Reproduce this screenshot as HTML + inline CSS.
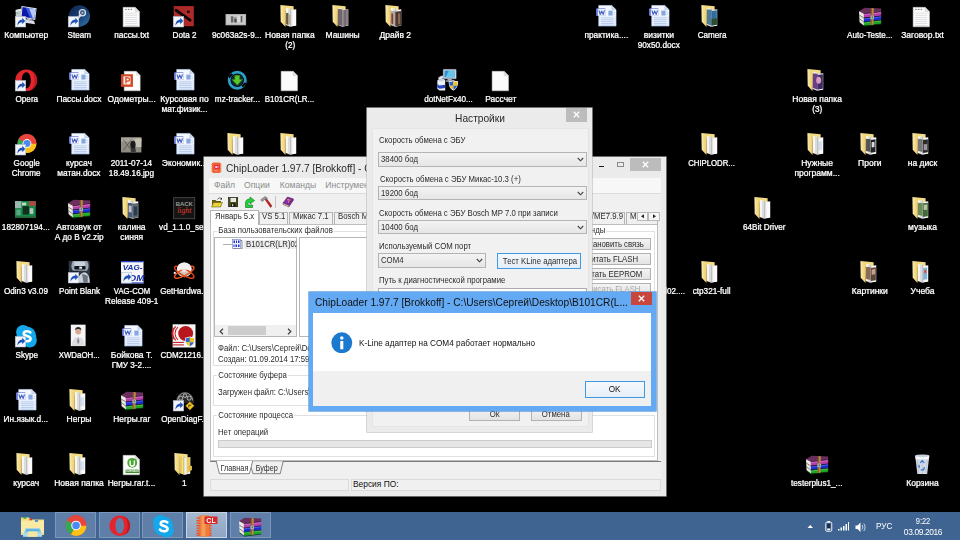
<!DOCTYPE html><html lang="ru"><head><meta charset="utf-8"><title>Desktop</title><style>
html,body{margin:0;padding:0;background:#000}
body{width:960px;height:540px;background:#000;position:relative;overflow:hidden;font-family:"Liberation Sans",sans-serif;}
.a{position:absolute}
.ic{position:absolute;width:22.5px;height:22.5px}
.ic svg{width:100%;height:100%;display:block;overflow:visible}
.lb{position:absolute;width:70px;text-align:center;color:#fff;font-size:8.5px;line-height:10px;white-space:nowrap;-webkit-text-stroke:.22px #fff;text-shadow:0 0 1px rgba(255,255,255,.3)}
.t{position:absolute;white-space:nowrap;font-size:8px;line-height:10px;color:#000}
.cb{position:absolute;border:.7px solid #b4b4b4;background:linear-gradient(#f3f3f3,#e6e6e6);box-sizing:border-box}
.btn{position:absolute;border:.7px solid #b2b2b2;background:linear-gradient(#f4f4f4,#e3e3e3);box-sizing:border-box;text-align:center;font-size:8px;color:#000;white-space:nowrap}
.btn span{display:inline-block;transform:scaleX(.885);transform-origin:50% 50%}
</style></head><body><div id="w" style="position:absolute;left:0;top:0;width:960px;height:540px;filter:blur(.4px)">
<svg width="0" height="0" style="position:absolute"><defs><linearGradient id="fg" x1="0" y1="0" x2="1" y2="0"><stop offset="0" stop-color="#faecb0"/><stop offset="1" stop-color="#ecca60"/></linearGradient><linearGradient id="sg" x1="0" y1="0" x2="1" y2="1"><stop offset="0" stop-color="#0f2248"/><stop offset=".55" stop-color="#1c4278"/><stop offset="1" stop-color="#2f7ab2"/></linearGradient></defs></svg>
<div class="ic" style="left:15.1px;top:5.0px"><svg viewBox="0 0 32 32"><polygon points="1,7 8.500,5.500 8.500,24 1,22" fill="#c6cad3"/><polygon points="1,7 8.500,5.500 8.500,8 1,9.500" fill="#e4e7ec"/><rect x="2.300" y="10.500" width="1.800" height="1.800" fill="#58c848"/><polygon points="14,20 27,22.500 28.500,27.500 12,25" fill="#d9dde5"/><polygon points="17,19 24,20.500 24,23 17,21.500" fill="#aeb4c0"/><polygon points="9.300,1.400 30.700,4.700 28.700,21.300 8,17.400" fill="#e9eef7"/><polygon points="10.600,3 29.300,5.900 27.600,19.700 9.400,16.200" fill="#0b18a8"/><polygon points="17,4 29.300,5.900 27.600,19.700 24,19" fill="#b8c9f6"/><polygon points="15,3.700 20,4.500 25.500,19.300 21.500,18.500" fill="#3a58d8"/><rect x="0.300" y="16.300" width="15" height="15" fill="#f1f4f9" stroke="#aab4c4" stroke-width=".7"/><path d="M3.500 29c0-5.500 2.800-8.200 6.800-8.200v-2.800l4.200 4.600-4.200 4.600v-2.800c-2.800 0-4.800 1.300-6.800 4.600z" fill="#1f52b8"/></svg></div>
<div class="lb" style="left:-8.7px;top:30.2px">Компьютер</div>
<div class="ic" style="left:67.8px;top:5.0px"><svg viewBox="0 0 32 32"><circle cx="16.100" cy="15.600" r="15.200" fill="url(#sg)"/><circle cx="20.500" cy="10.900" r="4.300" fill="none" stroke="#d5dde8" stroke-width="2"/><circle cx="20.500" cy="10.900" r="1.700" fill="#aebccc"/><path d="M17.500 14.500l-4.500 5.500" stroke="#d5dde8" stroke-width="3.200" stroke-linecap="round"/><circle cx="12" cy="21" r="3.200" fill="#d5dde8"/><rect x="0.300" y="16.300" width="15" height="15" fill="#f1f4f9" stroke="#aab4c4" stroke-width=".7"/><path d="M3.500 29c0-5.500 2.800-8.200 6.800-8.200v-2.800l4.200 4.600-4.200 4.600v-2.800c-2.800 0-4.800 1.300-6.800 4.600z" fill="#1f52b8"/></svg></div>
<div class="lb" style="left:44.0px;top:30.2px"><span style="display:inline-block;transform:scaleX(0.956)">Steam</span></div>
<div class="ic" style="left:120.5px;top:5.0px"><svg viewBox="0 0 32 32"><path d="M3 3.300h17l6.300 6.300v21.400h-23.300z" fill="#fbfbfb" stroke="#cfcfcf" stroke-width=".7"/><path d="M20 3.300v6.300h6.300z" fill="#dedede" stroke="#cfcfcf" stroke-width=".5"/><rect x="6" y="11" width="17" height="1" fill="#d2d5da"/><rect x="6" y="14" width="17" height="1" fill="#d2d5da"/><rect x="6" y="17" width="17" height="1" fill="#d2d5da"/><rect x="6" y="20" width="17" height="1" fill="#d2d5da"/><rect x="6" y="23" width="17" height="1" fill="#d2d5da"/><rect x="6" y="26" width="17" height="1" fill="#d2d5da"/><rect x="6" y="28.6" width="17" height="1" fill="#d2d5da"/><rect x="6" y="5.500" width="2.200" height="1.600" fill="#8a8a8a"/><rect x="9.800" y="5.500" width="2.200" height="1.600" fill="#8a8a8a"/><rect x="13.600" y="5.500" width="2.200" height="1.600" fill="#8a8a8a"/></svg></div>
<div class="lb" style="left:96.7px;top:30.2px"><span style="display:inline-block;transform:scaleX(0.984)">пассы.txt</span></div>
<div class="ic" style="left:173.2px;top:5.0px"><svg viewBox="0 0 32 32"><rect x="1" y="1.600" width="28.600" height="28.600" fill="#ae2a28"/><path d="M4.300 7.500L24.300 21.500" stroke="#0c0606" stroke-width="4.200" stroke-linecap="round"/><rect x="20" y="8" width="3.600" height="3.400" fill="#0c0606"/><path d="M2 25l5 4h-5z" fill="#d65a54" opacity=".6"/><rect x="0.300" y="16.300" width="15" height="15" fill="#f1f4f9" stroke="#aab4c4" stroke-width=".7"/><path d="M3.500 29c0-5.500 2.800-8.200 6.800-8.200v-2.800l4.200 4.600-4.200 4.600v-2.800c-2.800 0-4.800 1.300-6.800 4.600z" fill="#1f52b8"/></svg></div>
<div class="lb" style="left:149.5px;top:30.2px"><span style="display:inline-block;transform:scaleX(0.955)">Dota 2</span></div>
<div class="ic" style="left:225.9px;top:5.0px"><svg viewBox="0 0 32 32"><rect x="-0.700" y="12.800" width="29.300" height="16.100" fill="#a9a9a9"/><rect x="0.500" y="14" width="27" height="13.800" fill="#c9c9c9"/><rect x="7" y="16" width="3" height="9" fill="#6a6a6a"/><rect x="10" y="17" width="6" height="7" fill="#9a9a9a"/><rect x="16" y="16" width="4" height="8" fill="#dedede"/><rect x="21" y="15.500" width="2.200" height="9" fill="#5a5a5a"/><rect x="12" y="20" width="3" height="5" fill="#4a4a4a"/></svg></div>
<div class="lb" style="left:202.2px;top:30.2px"><span style="display:inline-block;transform:scaleX(0.964)">9c063a2s-9...</span></div>
<div class="ic" style="left:278.7px;top:5.0px"><svg viewBox="0 0 32 32"><polygon points="2,0 20.800,1.700 20.800,8 9.700,8" fill="#f3dc84"/><polygon points="9.200,4.400 16.100,5.400 16.100,30.700 9.200,28.600" fill="#f7f7f7"/><polygon points="12.700,5 16.100,5.400 16.100,30.700 12.700,29.700" fill="#dcdcdc"/><polygon points="16.100,7 24.500,6 24.500,29.600 16.100,30.700" fill="#fbfbfb"/><polygon points="16.100,7 19,6.700 19,30.300 16.100,30.700" fill="#e2e2e2"/><polygon points="15.700,5.300 16.500,5.450 16.500,30.700 15.700,30.600" fill="#a8a8a8"/><polygon points="10,11 13.500,11.600 13.500,28.500 10,27.500" fill="#6a5a48"/><polygon points="13.500,14 16,14.300 16,27 13.500,26.500" fill="#b8a890"/><polygon points="2,0 9.700,3.900 9.200,31.200 2.400,23.900" fill="url(#fg)"/></svg></div>
<div class="lb" style="left:254.9px;top:30.2px">Новая папка<br><span style="display:inline-block;transform:scaleX(0.957)">(2)</span></div>
<div class="ic" style="left:331.4px;top:5.0px"><svg viewBox="0 0 32 32"><polygon points="2,0 20.800,1.700 20.800,8 9.700,8" fill="#f3dc84"/><polygon points="9.200,4.400 16.100,5.400 16.100,30.700 9.200,28.600" fill="#f7f7f7"/><polygon points="12.700,5 16.100,5.400 16.100,30.700 12.700,29.700" fill="#dcdcdc"/><polygon points="16.100,7 24.500,6 24.500,29.600 16.100,30.700" fill="#fbfbfb"/><polygon points="16.100,7 19,6.700 19,30.300 16.100,30.700" fill="#e2e2e2"/><polygon points="15.700,5.300 16.500,5.450 16.500,30.700 15.700,30.600" fill="#a8a8a8"/><polygon points="9.500,5.500 16.100,6.500 16.100,30 9.500,28" fill="#6e666c"/><polygon points="16.100,7.500 24.500,6.500 24.500,29.200 16.100,30.300" fill="#8a8086"/><polygon points="19.500,7.200 20.500,7.100 20.500,29.800 19.500,29.900" fill="#4a4448"/><polygon points="2,0 9.700,3.900 9.200,31.200 2.400,23.900" fill="url(#fg)"/></svg></div>
<div class="lb" style="left:307.6px;top:30.2px">Машины</div>
<div class="ic" style="left:384.1px;top:5.0px"><svg viewBox="0 0 32 32"><polygon points="2,0 20.800,1.700 20.800,8 9.700,8" fill="#f3dc84"/><polygon points="9.200,4.400 16.100,5.400 16.100,30.700 9.200,28.600" fill="#f7f7f7"/><polygon points="12.700,5 16.100,5.400 16.100,30.700 12.700,29.700" fill="#dcdcdc"/><polygon points="16.100,7 24.500,6 24.500,29.600 16.100,30.700" fill="#fbfbfb"/><polygon points="16.100,7 19,6.700 19,30.300 16.100,30.700" fill="#e2e2e2"/><polygon points="15.700,5.300 16.500,5.450 16.500,30.700 15.700,30.600" fill="#a8a8a8"/><polygon points="9.500,8 16.100,9 16.100,30 9.500,28" fill="#b4a8a4"/><polygon points="10.500,12 13,12.400 13,27 10.500,26.300" fill="#8a3a30"/><polygon points="16.100,9.500 24.500,8.500 24.500,29.200 16.100,30.300" fill="#4a3830"/><polygon points="20,12 23,11.700 23,27 20,27.400" fill="#8a6a50"/><polygon points="2,0 9.700,3.900 9.200,31.200 2.400,23.900" fill="url(#fg)"/></svg></div>
<div class="lb" style="left:360.3px;top:30.2px">Драйв 2</div>
<div class="ic" style="left:595.0px;top:5.0px"><svg viewBox="0 0 32 32"><path d="M5.200 .600h18.500l6.300 6.300v23.100h-24.800z" fill="#e6eefb" stroke="#a8bfe4" stroke-width=".8"/><path d="M5.600 1h18l6 6v9h-24z" fill="#f4f8fe"/><path d="M23.700 .600v6.300h6.300z" fill="#c9d9f1" stroke="#a8bfe4" stroke-width=".5"/><rect x="8.500" y="17.8" width="18" height="1.200" fill="#b3c8ea"/><rect x="8.500" y="20.4" width="18" height="1.200" fill="#b3c8ea"/><rect x="8.500" y="23" width="18" height="1.200" fill="#b3c8ea"/><rect x="8.500" y="25.6" width="18" height="1.200" fill="#b3c8ea"/><rect x="8.500" y="28" width="18" height="1.200" fill="#b3c8ea"/><rect x="19" y="8" width="6" height="7" fill="#86a8de"/><rect x="26" y="10" width="2.500" height="1.100" fill="#b3c8ea"/><rect x="26" y="13" width="2.500" height="1.100" fill="#b3c8ea"/><rect x="1.600" y="4.700" width="13.500" height="11.100" rx="1.500" fill="#7684dc"/><rect x="4.200" y="5.600" width="10.900" height="9.600" rx=".8" fill="#f3f6fd"/><path d="M5.600 7.600l1.700 5.800 2.200-4.800 2.200 4.800 1.800-5.800" fill="none" stroke="#3f5fc4" stroke-width="1.600" stroke-linejoin="round"/></svg></div>
<div class="lb" style="left:571.2px;top:30.2px"><span style="display:inline-block;transform:scaleX(0.983)">практика....</span></div>
<div class="ic" style="left:647.7px;top:5.0px"><svg viewBox="0 0 32 32"><path d="M5.200 .600h18.500l6.300 6.300v23.100h-24.800z" fill="#e6eefb" stroke="#a8bfe4" stroke-width=".8"/><path d="M5.600 1h18l6 6v9h-24z" fill="#f4f8fe"/><path d="M23.700 .600v6.300h6.300z" fill="#c9d9f1" stroke="#a8bfe4" stroke-width=".5"/><rect x="8.500" y="17.8" width="18" height="1.200" fill="#b3c8ea"/><rect x="8.500" y="20.4" width="18" height="1.200" fill="#b3c8ea"/><rect x="8.500" y="23" width="18" height="1.200" fill="#b3c8ea"/><rect x="8.500" y="25.6" width="18" height="1.200" fill="#b3c8ea"/><rect x="8.500" y="28" width="18" height="1.200" fill="#b3c8ea"/><rect x="19" y="8" width="6" height="7" fill="#86a8de"/><rect x="26" y="10" width="2.500" height="1.100" fill="#b3c8ea"/><rect x="26" y="13" width="2.500" height="1.100" fill="#b3c8ea"/><rect x="1.600" y="4.700" width="13.500" height="11.100" rx="1.500" fill="#7684dc"/><rect x="4.200" y="5.600" width="10.900" height="9.600" rx=".8" fill="#f3f6fd"/><path d="M5.600 7.600l1.700 5.800 2.200-4.800 2.200 4.800 1.800-5.800" fill="none" stroke="#3f5fc4" stroke-width="1.600" stroke-linejoin="round"/></svg></div>
<div class="lb" style="left:623.9px;top:30.2px">визитки<br><span style="display:inline-block;transform:scaleX(0.968)">90x50.docx</span></div>
<div class="ic" style="left:700.4px;top:5.0px"><svg viewBox="0 0 32 32"><polygon points="2,0 20.800,1.700 20.800,8 9.700,8" fill="#f3dc84"/><polygon points="9.200,4.400 16.100,5.400 16.100,30.700 9.200,28.600" fill="#f7f7f7"/><polygon points="12.700,5 16.100,5.400 16.100,30.700 12.700,29.700" fill="#dcdcdc"/><polygon points="16.100,7 24.500,6 24.500,29.600 16.100,30.700" fill="#fbfbfb"/><polygon points="16.100,7 19,6.700 19,30.300 16.100,30.700" fill="#e2e2e2"/><polygon points="15.700,5.300 16.500,5.450 16.500,30.700 15.700,30.600" fill="#a8a8a8"/><polygon points="9.500,6 16.500,7 16.500,29 9.500,27" fill="#4d7a9c"/><polygon points="16.500,8.500 24,7.500 24,28 16.500,29" fill="#2f6f9f"/><polygon points="16.500,20 24,19 24,28 16.500,29" fill="#2c4f2c"/><polygon points="2,0 9.700,3.900 9.200,31.200 2.400,23.900" fill="url(#fg)"/></svg></div>
<div class="lb" style="left:676.7px;top:30.2px"><span style="display:inline-block;transform:scaleX(0.958)">Camera</span></div>
<div class="ic" style="left:858.6px;top:5.0px"><svg viewBox="0 0 32 32"><polygon points="0,9 8,4 31.500,4.800 31.500,9.500 7,12.500" fill="#6b2f5e"/><polygon points="0,9 7,12.500 7,29.500 0.800,24.500" fill="#ece8e2"/><path d="M0.300 14.300l6.700 4.200M0.600 19.500l6.400 4.800" stroke="#4a4a4a" stroke-width=".9"/><polygon points="7,12.500 31.500,9.500 31.500,15.300 7,18.300" fill="#b83cae"/><polygon points="7,12.500 31.500,9.500 31.500,11.300 7,14.300" fill="#e070d2"/><polygon points="7,18.700 31.500,15.700 31.500,21.300 7,24.300" fill="#1c2ed0"/><polygon points="7,18.700 31.500,15.700 31.500,17.300 7,20.300" fill="#4a62f0"/><polygon points="7,24.700 31.500,21.700 31.500,26.800 7,29.600" fill="#1fa526"/><polygon points="7,24.700 31.500,21.700 31.500,23.200 7,26.200" fill="#4ad64c"/><path d="M7 18.500L31.500 15.500M7 24.500L31.500 21.500M7 12.500L31.500 9.500" stroke="#1c1020" stroke-width=".9"/><polygon points="7,29.600 31.500,26.800 31.500,27.800 7,30.600 .800,25.500 .800,24.500" fill="#0e3a12"/><polygon points="17,4.400 21,4.500 20.600,28.200 16.600,28.600" fill="#b98a3c"/><polygon points="17,4.400 18.300,4.450 17.900,28.450 16.600,28.600" fill="#7a5520"/><rect x="16" y="14.500" width="5.400" height="6" rx="1.200" fill="#cfcfcf" stroke="#4a4a4a" stroke-width=".7"/><rect x="18" y="16" width="1.400" height="3" fill="#333"/></svg></div>
<div class="lb" style="left:834.8px;top:30.2px"><span style="display:inline-block;transform:scaleX(0.953)">Auto-Teste...</span></div>
<div class="ic" style="left:911.3px;top:5.0px"><svg viewBox="0 0 32 32"><path d="M3 3.300h17l6.300 6.300v21.400h-23.300z" fill="#fbfbfb" stroke="#cfcfcf" stroke-width=".7"/><path d="M20 3.300v6.300h6.300z" fill="#dedede" stroke="#cfcfcf" stroke-width=".5"/><rect x="6" y="11" width="17" height="1" fill="#d2d5da"/><rect x="6" y="14" width="17" height="1" fill="#d2d5da"/><rect x="6" y="17" width="17" height="1" fill="#d2d5da"/><rect x="6" y="20" width="17" height="1" fill="#d2d5da"/><rect x="6" y="23" width="17" height="1" fill="#d2d5da"/><rect x="6" y="26" width="17" height="1" fill="#d2d5da"/><rect x="6" y="28.6" width="17" height="1" fill="#d2d5da"/><rect x="6" y="5.500" width="2.200" height="1.600" fill="#8a8a8a"/><rect x="9.800" y="5.500" width="2.200" height="1.600" fill="#8a8a8a"/><rect x="13.600" y="5.500" width="2.200" height="1.600" fill="#8a8a8a"/></svg></div>
<div class="lb" style="left:887.5px;top:30.2px">Заговор.txt</div>
<div class="ic" style="left:15.1px;top:69.0px"><svg viewBox="0 0 32 32"><path fill-rule="evenodd" d="M16 .600a15.500 15.400 0 100 30.800A15.500 15.400 0 0016 .600zm0 3.900c3.700 0 6.400 5 6.400 11.500S19.700 27.500 16 27.500 9.600 22.500 9.600 16 12.300 4.500 16 4.500z" fill="#e3262e"/><path d="M22 1.800a15.500 15.400 0 010 28.400c4-2.800 5.800-7.800 5.800-14.200S26 4.600 22 1.800z" fill="#b3141c" opacity=".7"/><rect x="0.300" y="16.300" width="15" height="15" fill="#f1f4f9" stroke="#aab4c4" stroke-width=".7"/><path d="M3.500 29c0-5.500 2.800-8.200 6.800-8.200v-2.800l4.200 4.600-4.200 4.600v-2.800c-2.800 0-4.800 1.300-6.800 4.600z" fill="#1f52b8"/></svg></div>
<div class="lb" style="left:-8.7px;top:94.2px"><span style="display:inline-block;transform:scaleX(0.956)">Opera</span></div>
<div class="ic" style="left:67.8px;top:69.0px"><svg viewBox="0 0 32 32"><path d="M5.200 .600h18.500l6.300 6.300v23.100h-24.800z" fill="#e6eefb" stroke="#a8bfe4" stroke-width=".8"/><path d="M5.600 1h18l6 6v9h-24z" fill="#f4f8fe"/><path d="M23.700 .600v6.300h6.300z" fill="#c9d9f1" stroke="#a8bfe4" stroke-width=".5"/><rect x="8.500" y="17.8" width="18" height="1.200" fill="#b3c8ea"/><rect x="8.500" y="20.4" width="18" height="1.200" fill="#b3c8ea"/><rect x="8.500" y="23" width="18" height="1.200" fill="#b3c8ea"/><rect x="8.500" y="25.6" width="18" height="1.200" fill="#b3c8ea"/><rect x="8.500" y="28" width="18" height="1.200" fill="#b3c8ea"/><rect x="19" y="8" width="6" height="7" fill="#86a8de"/><rect x="26" y="10" width="2.500" height="1.100" fill="#b3c8ea"/><rect x="26" y="13" width="2.500" height="1.100" fill="#b3c8ea"/><rect x="1.600" y="4.700" width="13.500" height="11.100" rx="1.500" fill="#7684dc"/><rect x="4.200" y="5.600" width="10.900" height="9.600" rx=".8" fill="#f3f6fd"/><path d="M5.600 7.600l1.700 5.800 2.200-4.800 2.200 4.800 1.800-5.800" fill="none" stroke="#3f5fc4" stroke-width="1.600" stroke-linejoin="round"/></svg></div>
<div class="lb" style="left:44.0px;top:94.2px"><span style="display:inline-block;transform:scaleX(0.983)">Пассы.docx</span></div>
<div class="ic" style="left:120.5px;top:69.0px"><svg viewBox="0 0 32 32"><path d="M4.500 3.300h17l5.800 5.800v22h-22.800z" fill="#fdfdfd" stroke="#d0d0d0" stroke-width=".6"/><path d="M21.500 3.300v5.800h5.800z" fill="#e2e2e2"/><rect x="0" y="7.400" width="17" height="18" fill="#d24a26"/><rect x="3.500" y="10.500" width="10" height="11.500" fill="#fbeee8"/><path d="M7 11.500v9M7 12.500h2.800a2.200 2.200 0 010 4.600H7" fill="none" stroke="#d24a26" stroke-width="1.800"/></svg></div>
<div class="lb" style="left:96.7px;top:94.2px">Одометры...</div>
<div class="ic" style="left:173.2px;top:69.0px"><svg viewBox="0 0 32 32"><path d="M5.200 .600h18.500l6.300 6.300v23.100h-24.800z" fill="#e6eefb" stroke="#a8bfe4" stroke-width=".8"/><path d="M5.600 1h18l6 6v9h-24z" fill="#f4f8fe"/><path d="M23.700 .600v6.300h6.300z" fill="#c9d9f1" stroke="#a8bfe4" stroke-width=".5"/><rect x="8.500" y="17.8" width="18" height="1.200" fill="#b3c8ea"/><rect x="8.500" y="20.4" width="18" height="1.200" fill="#b3c8ea"/><rect x="8.500" y="23" width="18" height="1.200" fill="#b3c8ea"/><rect x="8.500" y="25.6" width="18" height="1.200" fill="#b3c8ea"/><rect x="8.500" y="28" width="18" height="1.200" fill="#b3c8ea"/><rect x="19" y="8" width="6" height="7" fill="#86a8de"/><rect x="26" y="10" width="2.500" height="1.100" fill="#b3c8ea"/><rect x="26" y="13" width="2.500" height="1.100" fill="#b3c8ea"/><rect x="1.600" y="4.700" width="13.500" height="11.100" rx="1.500" fill="#7684dc"/><rect x="4.200" y="5.600" width="10.900" height="9.600" rx=".8" fill="#f3f6fd"/><path d="M5.600 7.600l1.700 5.800 2.200-4.800 2.200 4.800 1.800-5.800" fill="none" stroke="#3f5fc4" stroke-width="1.600" stroke-linejoin="round"/></svg></div>
<div class="lb" style="left:149.5px;top:94.2px">Курсовая по<br><span style="display:inline-block;transform:scaleX(0.983)">мат.физик...</span></div>
<div class="ic" style="left:225.9px;top:69.0px"><svg viewBox="0 0 32 32"><circle cx="16" cy="16" r="11.500" fill="none" stroke="#2aa0c8" stroke-width="4"/><circle cx="16" cy="16" r="8.500" fill="#0e2a33"/><path d="M4 12l5-5M28 20l-5 5" stroke="#000" stroke-width="3"/><path d="M12.500 9h7v6h4l-7.500 8-7.500-8h4z" fill="#58c828" stroke="#2c7a10" stroke-width=".8"/></svg></div>
<div class="lb" style="left:202.2px;top:94.2px"><span style="display:inline-block;transform:scaleX(0.964)">mz-tracker...</span></div>
<div class="ic" style="left:278.7px;top:69.0px"><svg viewBox="0 0 32 32"><path d="M3 3.300h17l6.300 6.300v21.400h-23.300z" fill="#fbfbfb" stroke="#cfcfcf" stroke-width=".7"/><path d="M20 3.300v6.300h6.300z" fill="#dedede" stroke="#cfcfcf" stroke-width=".5"/></svg></div>
<div class="lb" style="left:254.9px;top:94.2px"><span style="display:inline-block;transform:scaleX(0.934)">B101CR(LR...</span></div>
<div class="ic" style="left:436.8px;top:69.0px"><svg viewBox="0 0 32 32"><rect x="8.800" y=".500" width="18.500" height="13.500" rx="1" fill="#d9dee7" stroke="#8d97a8" stroke-width=".6"/><rect x="10.600" y="2.200" width="14.900" height="9.800" fill="#2f8fd0"/><polygon points="17,2.200 25.500,2.200 25.500,12 12,12" fill="#74d2ec" opacity=".8"/><rect x="15" y="14" width="6" height="2.500" fill="#aab2c0"/><rect x="12.500" y="16.300" width="11" height="1.600" fill="#c9d0db"/><polygon points=".500,16.500 6,13 11.600,15.500 11.600,30.500 3.500,30.700 .500,28" fill="#eef2f8"/><polygon points=".500,16.500 6,13 11.600,15.500 6,18" fill="#cfd6e2"/><polygon points=".500,21.500 3.500,23.500 11.600,22.500 11.600,27 3.500,28 .500,26" fill="#2746c4"/><ellipse cx="5.500" cy="12.500" rx="4" ry="2.200" fill="#dfe5ee" stroke="#9aa4b6" stroke-width=".5" transform="rotate(-25 5.500 12.500)"/><path d="M16.600 17.500c2.500 0 4.700-.6 6.700-1.500 2 .9 4.200 1.500 6.700 1.500 0 7-2.200 11-6.700 13.200-4.500-2.200-6.700-6.200-6.700-13.200z" fill="#f2f5fa"/><path d="M17.600 18.400c2 0 4-.5 5.700-1.300v6.700h-5.300a22 22 0 01-.4-5.400z" fill="#2f66cc"/><path d="M23.300 17.100c1.700.8 3.700 1.300 5.700 1.300 0 2-.1 3.800-.4 5.400h-5.300z" fill="#f2c21e"/><path d="M18 23.800h5.300v5.800c-2.600-1.300-4.400-3-5.300-5.800z" fill="#f2c21e"/><path d="M23.300 23.800h5.300c-.9 2.800-2.700 4.500-5.300 5.800z" fill="#2f66cc"/></svg></div>
<div class="lb" style="left:413.1px;top:94.2px"><span style="display:inline-block;transform:scaleX(0.955)">dotNetFx40...</span></div>
<div class="ic" style="left:489.5px;top:69.0px"><svg viewBox="0 0 32 32"><path d="M3 3.300h17l6.300 6.300v21.400h-23.300z" fill="#fbfbfb" stroke="#cfcfcf" stroke-width=".7"/><path d="M20 3.300v6.300h6.300z" fill="#dedede" stroke="#cfcfcf" stroke-width=".5"/></svg></div>
<div class="lb" style="left:465.8px;top:94.2px">Рассчет</div>
<div class="ic" style="left:805.8px;top:69.0px"><svg viewBox="0 0 32 32"><polygon points="2,0 20.800,1.700 20.800,8 9.700,8" fill="#f3dc84"/><polygon points="9.200,4.400 16.100,5.400 16.100,30.700 9.200,28.600" fill="#f7f7f7"/><polygon points="12.700,5 16.100,5.400 16.100,30.700 12.700,29.700" fill="#dcdcdc"/><polygon points="16.100,7 24.500,6 24.500,29.600 16.100,30.700" fill="#fbfbfb"/><polygon points="16.100,7 19,6.700 19,30.300 16.100,30.700" fill="#e2e2e2"/><polygon points="15.700,5.300 16.500,5.450 16.500,30.700 15.700,30.600" fill="#a8a8a8"/><polygon points="9.500,6 16.500,7 16.500,29 9.500,27" fill="#6a3f8a"/><polygon points="16.500,8.500 24,7.500 24,28 16.500,29" fill="#3d2a66"/><ellipse cx="18" cy="16" rx="3.500" ry="5" fill="#d99ac0"/><polygon points="2,0 9.700,3.900 9.200,31.200 2.400,23.900" fill="url(#fg)"/></svg></div>
<div class="lb" style="left:782.1px;top:94.2px">Новая папка<br><span style="display:inline-block;transform:scaleX(0.957)">(3)</span></div>
<div class="ic" style="left:15.1px;top:133.0px"><svg viewBox="0 0 32 32"><circle cx="17" cy="15" r="13.500" fill="#e8453c"/><path d="M17 15L5.300 8.200A13.500 13.500 0 0010.300 26.700z" fill="#34a853"/><path d="M17 15l-6.700 11.700A13.500 13.500 0 0030.500 15z" fill="#fbc116"/><path d="M17 15h13.500A13.500 13.500 0 005.300 8.200z" fill="#e8453c"/><circle cx="17" cy="15" r="6.300" fill="#f4f4f4"/><circle cx="17" cy="15" r="4.900" fill="#4a8af4"/><rect x="0.300" y="16.300" width="15" height="15" fill="#f1f4f9" stroke="#aab4c4" stroke-width=".7"/><path d="M3.500 29c0-5.500 2.800-8.200 6.800-8.200v-2.800l4.200 4.600-4.200 4.600v-2.800c-2.800 0-4.800 1.300-6.800 4.600z" fill="#1f52b8"/></svg></div>
<div class="lb" style="left:-8.7px;top:158.2px"><span style="display:inline-block;transform:scaleX(0.958)">Google</span><br><span style="display:inline-block;transform:scaleX(0.958)">Chrome</span></div>
<div class="ic" style="left:67.8px;top:133.0px"><svg viewBox="0 0 32 32"><path d="M5.200 .600h18.500l6.300 6.300v23.100h-24.800z" fill="#e6eefb" stroke="#a8bfe4" stroke-width=".8"/><path d="M5.600 1h18l6 6v9h-24z" fill="#f4f8fe"/><path d="M23.700 .600v6.300h6.300z" fill="#c9d9f1" stroke="#a8bfe4" stroke-width=".5"/><rect x="8.500" y="17.8" width="18" height="1.200" fill="#b3c8ea"/><rect x="8.500" y="20.4" width="18" height="1.200" fill="#b3c8ea"/><rect x="8.500" y="23" width="18" height="1.200" fill="#b3c8ea"/><rect x="8.500" y="25.6" width="18" height="1.200" fill="#b3c8ea"/><rect x="8.500" y="28" width="18" height="1.200" fill="#b3c8ea"/><rect x="19" y="8" width="6" height="7" fill="#86a8de"/><rect x="26" y="10" width="2.500" height="1.100" fill="#b3c8ea"/><rect x="26" y="13" width="2.500" height="1.100" fill="#b3c8ea"/><rect x="1.600" y="4.700" width="13.500" height="11.100" rx="1.500" fill="#7684dc"/><rect x="4.200" y="5.600" width="10.900" height="9.600" rx=".8" fill="#f3f6fd"/><path d="M5.600 7.600l1.700 5.800 2.200-4.800 2.200 4.800 1.800-5.800" fill="none" stroke="#3f5fc4" stroke-width="1.600" stroke-linejoin="round"/></svg></div>
<div class="lb" style="left:44.0px;top:158.2px">курсач<br><span style="display:inline-block;transform:scaleX(0.983)">матан.docx</span></div>
<div class="ic" style="left:120.5px;top:133.0px"><svg viewBox="0 0 32 32"><rect x="0" y="6.400" width="29" height="21.300" fill="#8f8c84"/><rect x="0" y="6.400" width="29" height="6" fill="#a8a59b"/><rect x="20" y="8" width="9" height="12" fill="#c4c0b4"/><path d="M3 9l12 16M15 9L3 25" stroke="#4a4640" stroke-width=".9"/><ellipse cx="17" cy="17" rx="3.800" ry="6" fill="#1c1c1c"/><rect x="14" y="22" width="7" height="5" fill="#3a3832"/></svg></div>
<div class="lb" style="left:96.7px;top:158.2px"><span style="display:inline-block;transform:scaleX(0.966)">2011-07-14</span><br><span style="display:inline-block;transform:scaleX(0.965)">18.49.16.jpg</span></div>
<div class="ic" style="left:173.2px;top:133.0px"><svg viewBox="0 0 32 32"><path d="M5.200 .600h18.500l6.300 6.300v23.100h-24.800z" fill="#e6eefb" stroke="#a8bfe4" stroke-width=".8"/><path d="M5.600 1h18l6 6v9h-24z" fill="#f4f8fe"/><path d="M23.700 .600v6.300h6.300z" fill="#c9d9f1" stroke="#a8bfe4" stroke-width=".5"/><rect x="8.500" y="17.8" width="18" height="1.200" fill="#b3c8ea"/><rect x="8.500" y="20.4" width="18" height="1.200" fill="#b3c8ea"/><rect x="8.500" y="23" width="18" height="1.200" fill="#b3c8ea"/><rect x="8.500" y="25.6" width="18" height="1.200" fill="#b3c8ea"/><rect x="8.500" y="28" width="18" height="1.200" fill="#b3c8ea"/><rect x="19" y="8" width="6" height="7" fill="#86a8de"/><rect x="26" y="10" width="2.500" height="1.100" fill="#b3c8ea"/><rect x="26" y="13" width="2.500" height="1.100" fill="#b3c8ea"/><rect x="1.600" y="4.700" width="13.500" height="11.100" rx="1.500" fill="#7684dc"/><rect x="4.200" y="5.600" width="10.900" height="9.600" rx=".8" fill="#f3f6fd"/><path d="M5.600 7.600l1.700 5.800 2.200-4.800 2.200 4.800 1.800-5.800" fill="none" stroke="#3f5fc4" stroke-width="1.600" stroke-linejoin="round"/></svg></div>
<div class="lb" style="left:149.5px;top:158.2px">Экономик...</div>
<div class="ic" style="left:225.9px;top:133.0px"><svg viewBox="0 0 32 32"><polygon points="2,0 20.800,1.700 20.800,8 9.700,8" fill="#f3dc84"/><polygon points="9.200,4.400 16.100,5.400 16.100,30.700 9.200,28.600" fill="#f7f7f7"/><polygon points="12.700,5 16.100,5.400 16.100,30.700 12.700,29.700" fill="#dcdcdc"/><polygon points="16.100,7 24.500,6 24.500,29.600 16.100,30.700" fill="#fbfbfb"/><polygon points="16.100,7 19,6.700 19,30.300 16.100,30.700" fill="#e2e2e2"/><polygon points="15.700,5.300 16.500,5.450 16.500,30.700 15.700,30.600" fill="#a8a8a8"/><polygon points="2,0 9.700,3.900 9.200,31.200 2.400,23.900" fill="url(#fg)"/></svg></div>
<div class="ic" style="left:278.7px;top:133.0px"><svg viewBox="0 0 32 32"><polygon points="2,0 20.800,1.700 20.800,8 9.700,8" fill="#f3dc84"/><polygon points="9.200,4.400 16.100,5.400 16.100,30.700 9.200,28.600" fill="#f7f7f7"/><polygon points="12.700,5 16.100,5.400 16.100,30.700 12.700,29.700" fill="#dcdcdc"/><polygon points="16.100,7 24.500,6 24.500,29.600 16.100,30.700" fill="#fbfbfb"/><polygon points="16.100,7 19,6.700 19,30.300 16.100,30.700" fill="#e2e2e2"/><polygon points="15.700,5.300 16.500,5.450 16.500,30.700 15.700,30.600" fill="#a8a8a8"/><polygon points="2,0 9.700,3.900 9.200,31.200 2.400,23.900" fill="url(#fg)"/></svg></div>
<div class="ic" style="left:700.4px;top:133.0px"><svg viewBox="0 0 32 32"><polygon points="2,0 20.800,1.700 20.800,8 9.700,8" fill="#f3dc84"/><polygon points="9.200,4.400 16.100,5.400 16.100,30.700 9.200,28.600" fill="#f7f7f7"/><polygon points="12.700,5 16.100,5.400 16.100,30.700 12.700,29.700" fill="#dcdcdc"/><polygon points="16.100,7 24.500,6 24.500,29.600 16.100,30.700" fill="#fbfbfb"/><polygon points="16.100,7 19,6.700 19,30.300 16.100,30.700" fill="#e2e2e2"/><polygon points="15.700,5.300 16.500,5.450 16.500,30.700 15.700,30.600" fill="#a8a8a8"/><polygon points="2,0 9.700,3.900 9.200,31.200 2.400,23.900" fill="url(#fg)"/></svg></div>
<div class="lb" style="left:676.7px;top:158.2px"><span style="display:inline-block;transform:scaleX(0.914)">CHIPLODR...</span></div>
<div class="ic" style="left:805.8px;top:133.0px"><svg viewBox="0 0 32 32"><polygon points="2,0 20.800,1.700 20.800,8 9.700,8" fill="#f3dc84"/><polygon points="9.200,4.400 16.100,5.400 16.100,30.700 9.200,28.600" fill="#f7f7f7"/><polygon points="12.700,5 16.100,5.400 16.100,30.700 12.700,29.700" fill="#dcdcdc"/><polygon points="16.100,7 24.500,6 24.500,29.600 16.100,30.700" fill="#fbfbfb"/><polygon points="16.100,7 19,6.700 19,30.300 16.100,30.700" fill="#e2e2e2"/><polygon points="15.700,5.300 16.500,5.450 16.500,30.700 15.700,30.600" fill="#a8a8a8"/><polygon points="17.500,12 23,11.300 23,24 17.500,24.600" fill="#7aa6d8" opacity=".28"/><polygon points="2,0 9.700,3.900 9.200,31.200 2.400,23.900" fill="url(#fg)"/></svg></div>
<div class="lb" style="left:782.1px;top:158.2px">Нужные<br>программ...</div>
<div class="ic" style="left:858.6px;top:133.0px"><svg viewBox="0 0 32 32"><polygon points="2,0 20.800,1.700 20.800,8 9.700,8" fill="#f3dc84"/><polygon points="9.200,4.400 16.100,5.400 16.100,30.700 9.200,28.600" fill="#f7f7f7"/><polygon points="12.700,5 16.100,5.400 16.100,30.700 12.700,29.700" fill="#dcdcdc"/><polygon points="16.100,7 24.500,6 24.500,29.600 16.100,30.700" fill="#fbfbfb"/><polygon points="16.100,7 19,6.700 19,30.300 16.100,30.700" fill="#e2e2e2"/><polygon points="15.700,5.300 16.500,5.450 16.500,30.700 15.700,30.600" fill="#a8a8a8"/><polygon points="10,8 16.500,9 16.500,27 10,25.500" fill="#555"/><polygon points="17,10 23.500,9 23.500,27 17,28" fill="#222"/><polygon points="18,13 22,12.500 22,20 18,20.500" fill="#ddd"/><polygon points="2,0 9.700,3.900 9.200,31.200 2.400,23.900" fill="url(#fg)"/></svg></div>
<div class="lb" style="left:834.8px;top:158.2px">Проги</div>
<div class="ic" style="left:911.3px;top:133.0px"><svg viewBox="0 0 32 32"><polygon points="2,0 20.800,1.700 20.800,8 9.700,8" fill="#f3dc84"/><polygon points="9.200,4.400 16.100,5.400 16.100,30.700 9.200,28.600" fill="#f7f7f7"/><polygon points="12.700,5 16.100,5.400 16.100,30.700 12.700,29.700" fill="#dcdcdc"/><polygon points="16.100,7 24.500,6 24.500,29.600 16.100,30.700" fill="#fbfbfb"/><polygon points="16.100,7 19,6.700 19,30.300 16.100,30.700" fill="#e2e2e2"/><polygon points="15.700,5.300 16.500,5.450 16.500,30.700 15.700,30.600" fill="#a8a8a8"/><polygon points="10,8 16.500,9 16.500,27 10,25.500" fill="#777"/><polygon points="17,10 24,9 24,27.500 17,28.500" fill="#2a2a2a"/><polygon points="18,16 23,15.500 23,24 18,24.500" fill="#999"/><polygon points="2,0 9.700,3.900 9.200,31.200 2.400,23.900" fill="url(#fg)"/></svg></div>
<div class="lb" style="left:887.5px;top:158.2px">на диск</div>
<div class="ic" style="left:15.1px;top:197.0px"><svg viewBox="0 0 32 32"><rect x="0" y="5.800" width="29.500" height="23.800" fill="#168a48"/><rect x="0" y="5.800" width="9" height="10" fill="#9ab8b0"/><rect x="20" y="5.800" width="9.500" height="7" fill="#a84a40"/><rect x="11" y="13" width="9" height="12" fill="#10301c"/><rect x="21" y="16" width="5" height="8" fill="#b8c8c0"/><rect x="2" y="18" width="6" height="8" fill="#5aa888"/><rect x="0" y="27" width="29.500" height="2.600" fill="#2a6a40"/><rect x="10" y="8" width="6" height="4" fill="#c8d8c0"/></svg></div>
<div class="lb" style="left:-8.7px;top:222.2px"><span style="display:inline-block;transform:scaleX(0.965)">182807194...</span></div>
<div class="ic" style="left:67.8px;top:197.0px"><svg viewBox="0 0 32 32"><polygon points="0,9 8,4 31.500,4.800 31.500,9.500 7,12.500" fill="#6b2f5e"/><polygon points="0,9 7,12.500 7,29.500 0.800,24.500" fill="#ece8e2"/><path d="M0.300 14.300l6.700 4.200M0.600 19.500l6.400 4.800" stroke="#4a4a4a" stroke-width=".9"/><polygon points="7,12.500 31.500,9.500 31.500,15.300 7,18.300" fill="#b83cae"/><polygon points="7,12.500 31.500,9.500 31.500,11.300 7,14.300" fill="#e070d2"/><polygon points="7,18.700 31.500,15.700 31.500,21.300 7,24.300" fill="#1c2ed0"/><polygon points="7,18.700 31.500,15.700 31.500,17.300 7,20.300" fill="#4a62f0"/><polygon points="7,24.700 31.500,21.700 31.500,26.800 7,29.600" fill="#1fa526"/><polygon points="7,24.700 31.500,21.700 31.500,23.200 7,26.200" fill="#4ad64c"/><path d="M7 18.500L31.500 15.500M7 24.500L31.500 21.500M7 12.500L31.500 9.500" stroke="#1c1020" stroke-width=".9"/><polygon points="7,29.600 31.500,26.800 31.500,27.800 7,30.600 .800,25.500 .800,24.500" fill="#0e3a12"/><polygon points="17,4.400 21,4.500 20.600,28.200 16.600,28.600" fill="#b98a3c"/><polygon points="17,4.400 18.300,4.450 17.900,28.450 16.600,28.600" fill="#7a5520"/><rect x="16" y="14.500" width="5.400" height="6" rx="1.200" fill="#cfcfcf" stroke="#4a4a4a" stroke-width=".7"/><rect x="18" y="16" width="1.400" height="3" fill="#333"/></svg></div>
<div class="lb" style="left:44.0px;top:222.2px">Автозвук от<br><span style="display:inline-block;transform:scaleX(0.973)">А до В v2.zip</span></div>
<div class="ic" style="left:120.5px;top:197.0px"><svg viewBox="0 0 32 32"><polygon points="2,0 20.800,1.700 20.800,8 9.700,8" fill="#f3dc84"/><polygon points="9.200,4.400 16.100,5.400 16.100,30.700 9.200,28.600" fill="#f7f7f7"/><polygon points="12.700,5 16.100,5.400 16.100,30.700 12.700,29.700" fill="#dcdcdc"/><polygon points="16.100,7 24.500,6 24.500,29.600 16.100,30.700" fill="#fbfbfb"/><polygon points="16.100,7 19,6.700 19,30.300 16.100,30.700" fill="#e2e2e2"/><polygon points="15.700,5.300 16.500,5.450 16.500,30.700 15.700,30.600" fill="#a8a8a8"/><polygon points="9.500,8 16.100,9 16.100,30 9.500,28" fill="#4a5a78"/><polygon points="11,12 15,12.600 15,22 11,21.300" fill="#c8c0c8"/><polygon points="16.100,9.500 24.500,8.500 24.500,29.200 16.100,30.300" fill="#5a6a6a"/><polygon points="18,14 23,13.500 23,26 18,26.600" fill="#2a3a58"/><polygon points="2,0 9.700,3.900 9.200,31.200 2.400,23.900" fill="url(#fg)"/></svg></div>
<div class="lb" style="left:96.7px;top:222.2px">калина<br>синяя</div>
<div class="ic" style="left:173.2px;top:197.0px"><svg viewBox="0 0 32 32"><rect x="1" y="1" width="30" height="30" fill="#151515" stroke="#5a5a5a" stroke-width="1"/><text x="16" y="13" font-family="Liberation Sans,sans-serif" font-size="8.500" font-weight="bold" fill="#9a9a9a" text-anchor="middle">BACK</text><text x="16" y="23" font-family="Liberation Serif,serif" font-style="italic" font-size="11" fill="#e03a30" text-anchor="middle">light</text></svg></div>
<div class="lb" style="left:149.5px;top:222.2px"><span style="display:inline-block;transform:scaleX(0.960)">vd_1.1.0_se...</span></div>
<div class="ic" style="left:753.1px;top:197.0px"><svg viewBox="0 0 32 32"><polygon points="2,0 20.800,1.700 20.800,8 9.700,8" fill="#f3dc84"/><polygon points="9.200,4.400 16.100,5.400 16.100,30.700 9.200,28.600" fill="#f7f7f7"/><polygon points="12.700,5 16.100,5.400 16.100,30.700 12.700,29.700" fill="#dcdcdc"/><polygon points="16.100,7 24.500,6 24.500,29.600 16.100,30.700" fill="#fbfbfb"/><polygon points="16.100,7 19,6.700 19,30.300 16.100,30.700" fill="#e2e2e2"/><polygon points="15.700,5.300 16.500,5.450 16.500,30.700 15.700,30.600" fill="#a8a8a8"/><polygon points="2,0 9.700,3.900 9.200,31.200 2.400,23.900" fill="url(#fg)"/></svg></div>
<div class="lb" style="left:729.4px;top:222.2px"><span style="display:inline-block;transform:scaleX(0.957)">64Bit Driver</span></div>
<div class="ic" style="left:911.3px;top:197.0px"><svg viewBox="0 0 32 32"><polygon points="2,0 20.800,1.700 20.800,8 9.700,8" fill="#f3dc84"/><polygon points="9.200,4.400 16.100,5.400 16.100,30.700 9.200,28.600" fill="#f7f7f7"/><polygon points="12.700,5 16.100,5.400 16.100,30.700 12.700,29.700" fill="#dcdcdc"/><polygon points="16.100,7 24.500,6 24.500,29.600 16.100,30.700" fill="#fbfbfb"/><polygon points="16.100,7 19,6.700 19,30.300 16.100,30.700" fill="#e2e2e2"/><polygon points="15.700,5.300 16.500,5.450 16.500,30.700 15.700,30.600" fill="#a8a8a8"/><polygon points="10,8 16.500,9 16.500,27 10,25.500" fill="#6a8a5a"/><polygon points="17,9 24,8 24,27.500 17,28.500" fill="#3f6a3a"/><polygon points="18,11 23,10.500 23,18 18,18.500" fill="#b8c8a0"/><polygon points="2,0 9.700,3.900 9.200,31.200 2.400,23.900" fill="url(#fg)"/></svg></div>
<div class="lb" style="left:887.5px;top:222.2px">музыка</div>
<div class="ic" style="left:15.1px;top:261.0px"><svg viewBox="0 0 32 32"><polygon points="2,0 20.800,1.700 20.800,8 9.700,8" fill="#f3dc84"/><polygon points="9.200,4.400 16.100,5.400 16.100,30.700 9.200,28.600" fill="#f7f7f7"/><polygon points="12.700,5 16.100,5.400 16.100,30.700 12.700,29.700" fill="#dcdcdc"/><polygon points="16.100,7 24.500,6 24.500,29.600 16.100,30.700" fill="#fbfbfb"/><polygon points="16.100,7 19,6.700 19,30.300 16.100,30.700" fill="#e2e2e2"/><polygon points="15.700,5.300 16.500,5.450 16.500,30.700 15.700,30.600" fill="#a8a8a8"/><polygon points="2,0 9.700,3.900 9.200,31.200 2.400,23.900" fill="url(#fg)"/></svg></div>
<div class="lb" style="left:-8.7px;top:286.2px"><span style="display:inline-block;transform:scaleX(0.960)">Odin3 v3.09</span></div>
<div class="ic" style="left:67.8px;top:261.0px"><svg viewBox="0 0 32 32"><rect x="1" y="0" width="30" height="31" fill="#2e3844"/><path d="M7 0h20c3 4 3 10 0 14h-20c-3-4-3-10 0-14z" fill="#9aa6b4"/><path d="M9 1h14c2 2 2 5 0 6h-14z" fill="#dfe5ec" opacity=".7"/><rect x="9" y="7" width="16" height="5" rx="1.500" fill="#10141a"/><rect x="16" y="8" width="4" height="3" fill="#e8ecf0"/><path d="M14 31c0-8 3-14 9-15 4 0 8 5 8 15z" fill="#c9d0d8"/><path d="M20 18l8 3v10h-6z" fill="#6a7480"/><path d="M3 14h12v6h-12z" fill="#1a2028"/><rect x="0.300" y="16.300" width="15" height="15" fill="#f1f4f9" stroke="#aab4c4" stroke-width=".7"/><path d="M3.500 29c0-5.500 2.800-8.200 6.800-8.200v-2.800l4.200 4.600-4.200 4.600v-2.800c-2.800 0-4.800 1.300-6.800 4.600z" fill="#1f52b8"/></svg></div>
<div class="lb" style="left:44.0px;top:286.2px"><span style="display:inline-block;transform:scaleX(0.955)">Point Blank</span></div>
<div class="ic" style="left:120.5px;top:261.0px"><svg viewBox="0 0 32 32"><rect x="0" y="0" width="32" height="32" fill="#f6f6fa"/><rect x="0" y="0" width="32" height="1.800" fill="#2340b8"/><rect x="0" y="30.400" width="32" height="1.600" fill="#2340b8"/><text x="16.500" y="13.500" font-family="Liberation Sans,sans-serif" font-size="11.500" font-weight="bold" font-style="italic" fill="#1c34a8" text-anchor="middle">VAG-</text><text x="17" y="28" font-family="Liberation Sans,sans-serif" font-size="14" font-weight="bold" font-style="italic" fill="#1c34a8" text-anchor="middle">COM</text><rect x="0.300" y="16.300" width="15" height="15" fill="#f1f4f9" stroke="#aab4c4" stroke-width=".7"/><path d="M3.500 29c0-5.500 2.800-8.200 6.800-8.200v-2.800l4.200 4.600-4.200 4.600v-2.800c-2.800 0-4.800 1.300-6.800 4.600z" fill="#1f52b8"/></svg></div>
<div class="lb" style="left:96.7px;top:286.2px"><span style="display:inline-block;transform:scaleX(0.907)">VAG-COM</span><br><span style="display:inline-block;transform:scaleX(0.962)">Release 409-1</span></div>
<div class="ic" style="left:173.2px;top:261.0px"><svg viewBox="0 0 32 32"><circle cx="16" cy="12.500" r="10.500" fill="#f2efee"/><path d="M6 15a10.500 10.500 0 0020 0z" fill="#cfc8c4"/><ellipse cx="16" cy="16" rx="15.500" ry="4.800" fill="none" stroke="#de3e1c" stroke-width="2" transform="rotate(28 16 16)"/><ellipse cx="16" cy="16" rx="15.500" ry="4.800" fill="none" stroke="#e8571c" stroke-width="2" transform="rotate(-28 16 16)"/><path d="M5.500 12.500a10.500 10.500 0 0121 0z" fill="#f2efee"/><circle cx="2.500" cy="17" r="1.600" fill="#f4f4f4"/></svg></div>
<div class="lb" style="left:149.5px;top:286.2px"><span style="display:inline-block;transform:scaleX(0.953)">GetHardwa...</span></div>
<div class="ic" style="left:647.7px;top:261.0px"><svg viewBox="0 0 32 32"><polygon points="2,0 20.800,1.700 20.800,8 9.700,8" fill="#f3dc84"/><polygon points="9.200,4.400 16.100,5.400 16.100,30.700 9.200,28.600" fill="#f7f7f7"/><polygon points="12.700,5 16.100,5.400 16.100,30.700 12.700,29.700" fill="#dcdcdc"/><polygon points="16.100,7 24.500,6 24.500,29.600 16.100,30.700" fill="#fbfbfb"/><polygon points="16.100,7 19,6.700 19,30.300 16.100,30.700" fill="#e2e2e2"/><polygon points="15.700,5.300 16.500,5.450 16.500,30.700 15.700,30.600" fill="#a8a8a8"/><polygon points="2,0 9.700,3.900 9.200,31.200 2.400,23.900" fill="url(#fg)"/></svg></div>
<div class="lb" style="left:623.9px;top:286.2px"><span style="display:inline-block;transform:scaleX(0.954)">ChipLoad02....</span></div>
<div class="ic" style="left:700.4px;top:261.0px"><svg viewBox="0 0 32 32"><polygon points="2,0 20.800,1.700 20.800,8 9.700,8" fill="#f3dc84"/><polygon points="9.200,4.400 16.100,5.400 16.100,30.700 9.200,28.600" fill="#f7f7f7"/><polygon points="12.700,5 16.100,5.400 16.100,30.700 12.700,29.700" fill="#dcdcdc"/><polygon points="16.100,7 24.500,6 24.500,29.600 16.100,30.700" fill="#fbfbfb"/><polygon points="16.100,7 19,6.700 19,30.300 16.100,30.700" fill="#e2e2e2"/><polygon points="15.700,5.300 16.500,5.450 16.500,30.700 15.700,30.600" fill="#a8a8a8"/><polygon points="2,0 9.700,3.900 9.200,31.200 2.400,23.900" fill="url(#fg)"/></svg></div>
<div class="lb" style="left:676.7px;top:286.2px"><span style="display:inline-block;transform:scaleX(0.968)">ctp321-full</span></div>
<div class="ic" style="left:858.6px;top:261.0px"><svg viewBox="0 0 32 32"><polygon points="2,0 20.800,1.700 20.800,8 9.700,8" fill="#f3dc84"/><polygon points="9.200,4.400 16.100,5.400 16.100,30.700 9.200,28.600" fill="#f7f7f7"/><polygon points="12.700,5 16.100,5.400 16.100,30.700 12.700,29.700" fill="#dcdcdc"/><polygon points="16.100,7 24.500,6 24.500,29.600 16.100,30.700" fill="#fbfbfb"/><polygon points="16.100,7 19,6.700 19,30.300 16.100,30.700" fill="#e2e2e2"/><polygon points="15.700,5.300 16.500,5.450 16.500,30.700 15.700,30.600" fill="#a8a8a8"/><polygon points="10,8 16.500,9 16.500,27 10,25.500" fill="#8a6a55"/><polygon points="17,10 24,9 24,27.500 17,28.500" fill="#5a463a"/><polygon points="18,12 23,11.500 23,19 18,19.500" fill="#c8a088"/><polygon points="2,0 9.700,3.900 9.200,31.200 2.400,23.900" fill="url(#fg)"/></svg></div>
<div class="lb" style="left:834.8px;top:286.2px">Картинки</div>
<div class="ic" style="left:911.3px;top:261.0px"><svg viewBox="0 0 32 32"><polygon points="2,0 20.800,1.700 20.800,8 9.700,8" fill="#f3dc84"/><polygon points="9.200,4.400 16.100,5.400 16.100,30.700 9.200,28.600" fill="#f7f7f7"/><polygon points="12.700,5 16.100,5.400 16.100,30.700 12.700,29.700" fill="#dcdcdc"/><polygon points="16.100,7 24.500,6 24.500,29.600 16.100,30.700" fill="#fbfbfb"/><polygon points="16.100,7 19,6.700 19,30.300 16.100,30.700" fill="#e2e2e2"/><polygon points="15.700,5.300 16.500,5.450 16.500,30.700 15.700,30.600" fill="#a8a8a8"/><polygon points="17.500,10 23,9.300 23,26 17.500,26.600" fill="#5a9ad0" opacity=".75"/><polygon points="18.500,13 22,12.600 22,17 18.500,17.400" fill="#d05a4a"/><polygon points="2,0 9.700,3.900 9.200,31.200 2.400,23.900" fill="url(#fg)"/></svg></div>
<div class="lb" style="left:887.5px;top:286.2px">Учеба</div>
<div class="ic" style="left:15.1px;top:325.0px"><svg viewBox="0 0 32 32"><circle cx="11.500" cy="10" r="10" fill="#14a8ea"/><circle cx="21" cy="22" r="10" fill="#14a8ea"/><circle cx="16.200" cy="16" r="14" fill="#14a8ea"/><path d="M21.800 10.500c-1.800-2.300-9-2.800-9.400 1.600-.3 4.400 9.800 2.700 9.800 7.600 0 4.600-8.700 4.400-11 .9" fill="none" stroke="#fff" stroke-width="3.600" stroke-linecap="round"/><rect x="0.300" y="16.300" width="15" height="15" fill="#f1f4f9" stroke="#aab4c4" stroke-width=".7"/><path d="M3.500 29c0-5.500 2.800-8.200 6.800-8.200v-2.800l4.200 4.600-4.200 4.600v-2.800c-2.800 0-4.800 1.300-6.800 4.600z" fill="#1f52b8"/></svg></div>
<div class="lb" style="left:-8.7px;top:350.2px"><span style="display:inline-block;transform:scaleX(0.956)">Skype</span></div>
<div class="ic" style="left:67.8px;top:325.0px"><svg viewBox="0 0 32 32"><rect x="4" y="-.500" width="21" height="30.500" fill="#f4f4f4"/><ellipse cx="14.500" cy="8.500" rx="4.200" ry="5" fill="#d9ab94"/><path d="M10 7.500c0-6 9-6 9 0-2-2.500-7-2.500-9 0z" fill="#262626"/><path d="M5.500 30c0-9 3.500-13 9-13s9 4 9 13z" fill="#dcdce2"/><path d="M13.600 17h1.800l.8 7-1.700 3-1.700-3z" fill="#8e8e98"/><path d="M11.500 16.500l3 2.500 3-2.500" fill="none" stroke="#fff" stroke-width="1.200"/></svg></div>
<div class="lb" style="left:44.0px;top:350.2px"><span style="display:inline-block;transform:scaleX(0.924)">XWDaOH...</span></div>
<div class="ic" style="left:120.5px;top:325.0px"><svg viewBox="0 0 32 32"><path d="M5.200 .600h18.500l6.300 6.300v23.100h-24.800z" fill="#e6eefb" stroke="#a8bfe4" stroke-width=".8"/><path d="M5.600 1h18l6 6v9h-24z" fill="#f4f8fe"/><path d="M23.700 .600v6.300h6.300z" fill="#c9d9f1" stroke="#a8bfe4" stroke-width=".5"/><rect x="8.500" y="17.8" width="18" height="1.200" fill="#b3c8ea"/><rect x="8.500" y="20.4" width="18" height="1.200" fill="#b3c8ea"/><rect x="8.500" y="23" width="18" height="1.200" fill="#b3c8ea"/><rect x="8.500" y="25.6" width="18" height="1.200" fill="#b3c8ea"/><rect x="8.500" y="28" width="18" height="1.200" fill="#b3c8ea"/><rect x="19" y="8" width="6" height="7" fill="#86a8de"/><rect x="26" y="10" width="2.500" height="1.100" fill="#b3c8ea"/><rect x="26" y="13" width="2.500" height="1.100" fill="#b3c8ea"/><rect x="1.600" y="4.700" width="13.500" height="11.100" rx="1.500" fill="#7684dc"/><rect x="4.200" y="5.600" width="10.900" height="9.600" rx=".8" fill="#f3f6fd"/><path d="M5.600 7.600l1.700 5.800 2.200-4.800 2.200 4.800 1.800-5.800" fill="none" stroke="#3f5fc4" stroke-width="1.600" stroke-linejoin="round"/></svg></div>
<div class="lb" style="left:96.7px;top:350.2px">Бойкова Т.<br><span style="display:inline-block;transform:scaleX(0.967)">ГМУ 3-2....</span></div>
<div class="ic" style="left:173.2px;top:325.0px"><svg viewBox="0 0 32 32"><rect x="-.500" y="-1" width="32.500" height="33" fill="#f6f6f6"/><circle cx="18" cy="12" r="10.600" fill="#b8161c"/><path d="M7 3a12 12 0 000 18M4 2a14 14 0 000 20M1.500 4a12 12 0 000 16" fill="none" stroke="#c8262c" stroke-width="1.500"/><rect x="-.500" y="24" width="16" height="1.600" fill="#c8262c"/><rect x="-.500" y="27.500" width="16" height="1.600" fill="#c8262c"/><path d="M17 18c2.600 0 4.900-.6 7-1.600 2.100 1 4.400 1.600 7 1.600 0 7-2.300 11-7 13.200-4.700-2.200-7-6.200-7-13.200z" fill="#f2f5fa"/><path d="M18 18.900c2.100 0 4.200-.5 6-1.400v6.900h-5.600a22 22 0 01-.4-5.500z" fill="#2f66cc"/><path d="M24 17.500c1.800.9 3.900 1.400 6 1.400 0 2-.1 3.900-.4 5.500h-5.600z" fill="#f2c21e"/><path d="M18.400 24.400h5.600v5.800c-2.700-1.300-4.600-3-5.600-5.800z" fill="#f2c21e"/><path d="M24 24.400h5.600c-1 2.800-2.900 4.500-5.600 5.800z" fill="#2f66cc"/></svg></div>
<div class="lb" style="left:149.5px;top:350.2px"><span style="display:inline-block;transform:scaleX(0.945)">CDM21216...</span></div>
<div class="ic" style="left:15.1px;top:389.0px"><svg viewBox="0 0 32 32"><path d="M5.200 .600h18.500l6.300 6.300v23.100h-24.800z" fill="#e6eefb" stroke="#a8bfe4" stroke-width=".8"/><path d="M5.600 1h18l6 6v9h-24z" fill="#f4f8fe"/><path d="M23.700 .600v6.300h6.300z" fill="#c9d9f1" stroke="#a8bfe4" stroke-width=".5"/><rect x="8.500" y="17.8" width="18" height="1.200" fill="#b3c8ea"/><rect x="8.500" y="20.4" width="18" height="1.200" fill="#b3c8ea"/><rect x="8.500" y="23" width="18" height="1.200" fill="#b3c8ea"/><rect x="8.500" y="25.6" width="18" height="1.200" fill="#b3c8ea"/><rect x="8.500" y="28" width="18" height="1.200" fill="#b3c8ea"/><rect x="19" y="8" width="6" height="7" fill="#86a8de"/><rect x="26" y="10" width="2.500" height="1.100" fill="#b3c8ea"/><rect x="26" y="13" width="2.500" height="1.100" fill="#b3c8ea"/><rect x="1.600" y="4.700" width="13.500" height="11.100" rx="1.500" fill="#7684dc"/><rect x="4.200" y="5.600" width="10.900" height="9.600" rx=".8" fill="#f3f6fd"/><path d="M5.600 7.600l1.700 5.800 2.200-4.800 2.200 4.800 1.800-5.800" fill="none" stroke="#3f5fc4" stroke-width="1.600" stroke-linejoin="round"/></svg></div>
<div class="lb" style="left:-8.7px;top:414.2px"><span style="display:inline-block;transform:scaleX(0.977)">Ин.язык.d...</span></div>
<div class="ic" style="left:67.8px;top:389.0px"><svg viewBox="0 0 32 32"><polygon points="2,0 20.800,1.700 20.800,8 9.700,8" fill="#f3dc84"/><polygon points="9.200,4.400 16.100,5.400 16.100,30.700 9.200,28.600" fill="#f7f7f7"/><polygon points="12.700,5 16.100,5.400 16.100,30.700 12.700,29.700" fill="#dcdcdc"/><polygon points="16.100,7 24.500,6 24.500,29.600 16.100,30.700" fill="#fbfbfb"/><polygon points="16.100,7 19,6.700 19,30.300 16.100,30.700" fill="#e2e2e2"/><polygon points="15.700,5.300 16.500,5.450 16.500,30.700 15.700,30.600" fill="#a8a8a8"/><polygon points="17.500,12 23,11.300 23,24 17.500,24.600" fill="#7aa6d8" opacity=".28"/><polygon points="2,0 9.700,3.900 9.200,31.200 2.400,23.900" fill="url(#fg)"/></svg></div>
<div class="lb" style="left:44.0px;top:414.2px">Негры</div>
<div class="ic" style="left:120.5px;top:389.0px"><svg viewBox="0 0 32 32"><polygon points="0,9 8,4 31.500,4.800 31.500,9.500 7,12.500" fill="#6b2f5e"/><polygon points="0,9 7,12.500 7,29.500 0.800,24.500" fill="#ece8e2"/><path d="M0.300 14.300l6.700 4.200M0.600 19.500l6.400 4.800" stroke="#4a4a4a" stroke-width=".9"/><polygon points="7,12.500 31.500,9.500 31.500,15.300 7,18.300" fill="#b83cae"/><polygon points="7,12.500 31.500,9.500 31.500,11.300 7,14.300" fill="#e070d2"/><polygon points="7,18.700 31.500,15.700 31.500,21.300 7,24.300" fill="#1c2ed0"/><polygon points="7,18.700 31.500,15.700 31.500,17.300 7,20.300" fill="#4a62f0"/><polygon points="7,24.700 31.500,21.700 31.500,26.800 7,29.600" fill="#1fa526"/><polygon points="7,24.700 31.500,21.700 31.500,23.200 7,26.200" fill="#4ad64c"/><path d="M7 18.500L31.500 15.500M7 24.500L31.500 21.500M7 12.500L31.500 9.500" stroke="#1c1020" stroke-width=".9"/><polygon points="7,29.600 31.500,26.800 31.500,27.800 7,30.600 .800,25.500 .800,24.500" fill="#0e3a12"/><polygon points="17,4.400 21,4.500 20.600,28.200 16.600,28.600" fill="#b98a3c"/><polygon points="17,4.400 18.300,4.450 17.900,28.450 16.600,28.600" fill="#7a5520"/><rect x="16" y="14.500" width="5.400" height="6" rx="1.200" fill="#cfcfcf" stroke="#4a4a4a" stroke-width=".7"/><rect x="18" y="16" width="1.400" height="3" fill="#333"/></svg></div>
<div class="lb" style="left:96.7px;top:414.2px"><span style="display:inline-block;transform:scaleX(0.984)">Негры.rar</span></div>
<div class="ic" style="left:173.2px;top:389.0px"><svg viewBox="0 0 32 32"><path d="M4 17a13 13 0 0126 0v3h-26z" fill="#262626"/><path d="M6 16.500a11 11 0 0122 0" fill="none" stroke="#9a9a9a" stroke-width="1.300"/><circle cx="11" cy="13" r="3" fill="#3a3a3a" stroke="#e8e8e8" stroke-width="1"/><circle cx="17" cy="9.500" r="2.600" fill="#3a3a3a" stroke="#e8e8e8" stroke-width="1"/><circle cx="23" cy="13" r="3" fill="#3a3a3a" stroke="#e8e8e8" stroke-width="1"/><rect x="19.500" y="19.500" width="9" height="9" fill="#f2c21e" stroke="#222" stroke-width=".6" transform="rotate(45 24 24)"/><path d="M22.500 26v-3h3.500" fill="none" stroke="#222" stroke-width="1.200"/><rect x="0.300" y="16.300" width="15" height="15" fill="#f1f4f9" stroke="#aab4c4" stroke-width=".7"/><path d="M3.500 29c0-5.500 2.800-8.200 6.800-8.200v-2.800l4.200 4.600-4.200 4.600v-2.800c-2.800 0-4.800 1.300-6.800 4.600z" fill="#1f52b8"/></svg></div>
<div class="lb" style="left:149.5px;top:414.2px"><span style="display:inline-block;transform:scaleX(0.947)">OpenDiagF...</span></div>
<div class="ic" style="left:15.1px;top:453.0px"><svg viewBox="0 0 32 32"><polygon points="2,0 20.800,1.700 20.800,8 9.700,8" fill="#f3dc84"/><polygon points="9.200,4.400 16.100,5.400 16.100,30.700 9.200,28.600" fill="#f7f7f7"/><polygon points="12.700,5 16.100,5.400 16.100,30.700 12.700,29.700" fill="#dcdcdc"/><polygon points="16.100,7 24.500,6 24.500,29.600 16.100,30.700" fill="#fbfbfb"/><polygon points="16.100,7 19,6.700 19,30.300 16.100,30.700" fill="#e2e2e2"/><polygon points="15.700,5.300 16.500,5.450 16.500,30.700 15.700,30.600" fill="#a8a8a8"/><polygon points="2,0 9.700,3.900 9.200,31.200 2.400,23.900" fill="url(#fg)"/></svg></div>
<div class="lb" style="left:-8.7px;top:478.2px">курсач</div>
<div class="ic" style="left:67.8px;top:453.0px"><svg viewBox="0 0 32 32"><polygon points="2,0 20.800,1.700 20.800,8 9.700,8" fill="#f3dc84"/><polygon points="9.200,4.400 16.100,5.400 16.100,30.700 9.200,28.600" fill="#f7f7f7"/><polygon points="12.700,5 16.100,5.400 16.100,30.700 12.700,29.700" fill="#dcdcdc"/><polygon points="16.100,7 24.500,6 24.500,29.600 16.100,30.700" fill="#fbfbfb"/><polygon points="16.100,7 19,6.700 19,30.300 16.100,30.700" fill="#e2e2e2"/><polygon points="15.700,5.300 16.500,5.450 16.500,30.700 15.700,30.600" fill="#a8a8a8"/><polygon points="17.500,12 23,11.300 23,24 17.500,24.600" fill="#7aa6d8" opacity=".28"/><polygon points="2,0 9.700,3.900 9.200,31.200 2.400,23.900" fill="url(#fg)"/></svg></div>
<div class="lb" style="left:44.0px;top:478.2px">Новая папка</div>
<div class="ic" style="left:120.5px;top:453.0px"><svg viewBox="0 0 32 32"><path d="M3 3.300h17l6.300 6.300v21.400h-23.300z" fill="#fbfbfb" stroke="#cfcfcf" stroke-width=".7"/><path d="M20 3.300v6.300h6.300z" fill="#dedede" stroke="#cfcfcf" stroke-width=".5"/><circle cx="16" cy="14" r="7" fill="#4aa832"/><path d="M13 10.500v5a3 3 0 006 0v-5" fill="none" stroke="#fff" stroke-width="2"/><rect x="6.500" y="23" width="19.500" height="5.500" fill="#3c8a2a"/><text x="16.200" y="27.300" font-family="Liberation Sans,sans-serif" font-size="4.200" font-weight="bold" fill="#fff" text-anchor="middle">TORRENT</text></svg></div>
<div class="lb" style="left:96.7px;top:478.2px"><span style="display:inline-block;transform:scaleX(0.974)">Негры.rar.t...</span></div>
<div class="ic" style="left:173.2px;top:453.0px"><svg viewBox="0 0 32 32"><polygon points="2,0 20.800,1.700 20.800,8 9.700,8" fill="#f3dc84"/><polygon points="9.200,4.400 16.100,5.400 16.100,30.700 9.200,28.600" fill="#f7f7f7"/><polygon points="12.700,5 16.100,5.400 16.100,30.700 12.700,29.700" fill="#dcdcdc"/><polygon points="16.100,7 24.500,6 24.500,29.600 16.100,30.700" fill="#fbfbfb"/><polygon points="16.100,7 19,6.700 19,30.300 16.100,30.700" fill="#e2e2e2"/><polygon points="15.700,5.300 16.500,5.450 16.500,30.700 15.700,30.600" fill="#a8a8a8"/><polygon points="9.200,4.400 16.100,5.400 16.100,30.700 9.200,28.600" fill="#e5c75f"/><polygon points="12.500,5 14,5.200 14,30.100 12.500,29.600" fill="#f6e49a"/><polygon points="16.100,7 19.500,6.700 19.500,30.300 16.100,30.700" fill="#eeeeee"/><polygon points="19.500,6.700 24.500,6 24.500,25 19.500,30.300" fill="#e9cb62"/><polygon points="22,17.500 27,18.500 27,24 22,26.500" fill="#d9b84e"/><polygon points="2,0 9.700,3.900 9.200,31.200 2.400,23.900" fill="url(#fg)"/></svg></div>
<div class="lb" style="left:149.5px;top:478.2px"><span style="display:inline-block;transform:scaleX(0.970)">1</span></div>
<div class="ic" style="left:805.8px;top:453.0px"><svg viewBox="0 0 32 32"><polygon points="0,9 8,4 31.500,4.800 31.500,9.500 7,12.500" fill="#6b2f5e"/><polygon points="0,9 7,12.500 7,29.500 0.800,24.500" fill="#ece8e2"/><path d="M0.300 14.300l6.700 4.200M0.600 19.500l6.400 4.800" stroke="#4a4a4a" stroke-width=".9"/><polygon points="7,12.500 31.500,9.500 31.500,15.300 7,18.300" fill="#b83cae"/><polygon points="7,12.500 31.500,9.500 31.500,11.300 7,14.300" fill="#e070d2"/><polygon points="7,18.700 31.500,15.700 31.500,21.300 7,24.300" fill="#1c2ed0"/><polygon points="7,18.700 31.500,15.700 31.500,17.300 7,20.300" fill="#4a62f0"/><polygon points="7,24.700 31.500,21.700 31.500,26.800 7,29.600" fill="#1fa526"/><polygon points="7,24.700 31.500,21.700 31.500,23.200 7,26.200" fill="#4ad64c"/><path d="M7 18.500L31.500 15.500M7 24.500L31.500 21.500M7 12.500L31.500 9.500" stroke="#1c1020" stroke-width=".9"/><polygon points="7,29.600 31.500,26.800 31.500,27.800 7,30.600 .800,25.500 .800,24.500" fill="#0e3a12"/><polygon points="17,4.400 21,4.500 20.600,28.200 16.600,28.600" fill="#b98a3c"/><polygon points="17,4.400 18.300,4.450 17.900,28.450 16.600,28.600" fill="#7a5520"/><rect x="16" y="14.500" width="5.400" height="6" rx="1.200" fill="#cfcfcf" stroke="#4a4a4a" stroke-width=".7"/><rect x="18" y="16" width="1.400" height="3" fill="#333"/></svg></div>
<div class="lb" style="left:782.1px;top:478.2px"><span style="display:inline-block;transform:scaleX(0.965)">testerplus1_...</span></div>
<div class="ic" style="left:911.3px;top:453.0px"><svg viewBox="0 0 32 32"><path d="M6 4h20l-3 26h-14z" fill="#dfe6ee" opacity=".95"/><path d="M6 4h20l-.6 5h-18.800z" fill="#f6f8fb"/><ellipse cx="16" cy="4" rx="10" ry="2" fill="#c8d0da"/><path d="M9 10l2 19M16 10v20M23 10l-2 19" stroke="#aab4c2" stroke-width=".8" fill="none"/><path d="M13 14l3-3 3 3M19 20l-1 4h-4M12 21l-1-4" fill="none" stroke="#2a78d8" stroke-width="1.800"/></svg></div>
<div class="lb" style="left:887.5px;top:478.2px">Корзина</div>
<div class="a" style="left:203.70px;top:156.70px;width:462.40px;height:339.40px;background:#ebebeb;box-shadow:0 0 0 .6px #adadad"></div>
<svg class="a" style="left:211.3px;top:161.5px;width:10.800px;height:11.500px" viewBox="0 0 22 23"><rect x="2" y="1" width="18" height="21" rx="3" fill="#f0703a"/><g fill="#f4904e"><rect x="0" y="4" width="22" height="1.800"/><rect x="0" y="8.500" width="22" height="1.800"/><rect x="0" y="13" width="22" height="1.800"/><rect x="0" y="17.500" width="22" height="1.800"/></g><rect x="3.500" y="2" width="15" height="19" rx="2" fill="#ee5a34"/><rect x="7" y="6" width="11" height="8" rx="1" fill="#e62e4e"/><rect x="9" y="8" width="3" height="4" fill="#fbe0e0"/><rect x="13.500" y="8" width="1.500" height="4" fill="#fbe0e0"/><rect x="6" y="17" width="9" height="1.500" fill="#f8b070"/></svg>
<div class="t" style="left:225.80px;top:162.71px;font-size:10.50px;line-height:10.50px;color:#2a2a2a;transform:scaleX(0.968);transform-origin:0 50%;">ChipLoader 1.97.7 [Brokkoff] - C:\Users\Сергей\Desktop</div>
<div class="a" style="left:599.00px;top:165.60px;width:5.20px;height:1.60px;background:#1a1a1a"></div>
<div class="a" style="left:617.00px;top:162.00px;width:6.80px;height:5.40px;border:.8px solid #8a8a8a;border-top-width:1.600px;box-sizing:border-box"></div>
<div class="a" style="left:630.00px;top:157.60px;width:30.70px;height:13.20px;background:#bcbcbc"></div>
<svg class="a" style="left:641.8px;top:160.7px;width:7px;height:7px" viewBox="0 0 7 7"><path d="M.8.8l5.400 5.400M6.200.8L.8 6.200" stroke="#fff" stroke-width="1.300"/></svg>
<div class="a" style="left:209.30px;top:178.30px;width:451.90px;height:313.00px;background:#f0f0f0"></div>
<div class="a" style="left:209.30px;top:178.30px;width:451.90px;height:14.30px;background:#f7f7f7"></div>
<div class="t" style="left:214.00px;top:180.72px;font-size:8.60px;line-height:8.60px;color:#8c8c8c;">Файл</div>
<div class="t" style="left:244.00px;top:180.72px;font-size:8.60px;line-height:8.60px;color:#8c8c8c;">Опции</div>
<div class="t" style="left:279.70px;top:180.72px;font-size:8.60px;line-height:8.60px;color:#8c8c8c;">Команды</div>
<div class="t" style="left:325.30px;top:180.72px;font-size:8.60px;line-height:8.60px;color:#8c8c8c;">Инструменты</div>
<div class="t" style="left:383.00px;top:180.72px;font-size:8.60px;line-height:8.60px;color:#8c8c8c;">Справка</div>
<div class="a" style="left:209.30px;top:192.60px;width:451.90px;height:0.70px;background:#dcdcdc"></div>
<svg class="a" style="left:210.8px;top:196.5px;width:12px;height:11px" viewBox="0 0 24 22"><path d="M2 6h7l2 2h9v12h-18z" fill="#6a5a10"/><path d="M1 20l4-9h18l-4 9z" fill="#e8d23a" stroke="#5a4a08" stroke-width="1"/><path d="M13 5c2-4 6-4 8-1" fill="none" stroke="#222" stroke-width="1.300"/><path d="M22 1v4h-4z" fill="#222"/></svg>
<svg class="a" style="left:227.8px;top:196.8px;width:10.500px;height:10.500px" viewBox="0 0 21 21"><rect x="1" y="1" width="19" height="19" fill="#4a4a1a" stroke="#111" stroke-width="1.200"/><rect x="5" y="2" width="11" height="8" fill="#e8e8e8"/><rect x="6" y="13" width="9" height="7" fill="#1a1a1a"/><rect x="8" y="14.500" width="2.500" height="4" fill="#ddd"/></svg>
<svg class="a" style="left:244px;top:196.5px;width:11.500px;height:11px" viewBox="0 0 23 22"><path d="M3 21v-9c0-5 3-8 9-8V0l9 7-9 7v-4c-3 0-4 1-4 3v3h9v5z" fill="#1ed83a" stroke="#0a6a1a" stroke-width="1.200"/></svg>
<svg class="a" style="left:260px;top:196px;width:12.500px;height:12px" viewBox="0 0 25 24"><path d="M10 7l3-2 11 15-3 3z" fill="#c81c1c" stroke="#6a0a0a" stroke-width=".8"/><path d="M1 8l9-7 5 3-2 3-3-1-5 5z" fill="#9a9a9a" stroke="#444" stroke-width=".8"/></svg>
<div class="a" style="left:275.30px;top:195.50px;width:0.70px;height:12.50px;background:#c4c4c4"></div>
<svg class="a" style="left:281.5px;top:196px;width:12px;height:12px" viewBox="0 0 24 24"><path d="M2 14l9-12 12 4-9 13z" fill="#8a2aa8" stroke="#3a0a4a" stroke-width="1"/><path d="M2 14l12 5v3l-12-5z" fill="#e8d8a0" stroke="#3a0a4a" stroke-width=".8"/><path d="M14 19l9-13v3l-9 13z" fill="#5a1a70"/><text x="10" y="14" font-family="Liberation Sans,sans-serif" font-size="9" font-weight="bold" fill="#f0d020">?</text></svg>
<div class="a" style="left:259.30px;top:211.80px;width:29.00px;height:13.00px;background:#f0f0f0;border:.7px solid #b4b4b4;box-sizing:border-box"></div>
<div class="t" style="left:262.30px;top:212.45px;font-size:8.80px;line-height:8.80px;color:#2b2b2b;transform:scaleX(0.885);transform-origin:0 50%;">VS 5.1</div>
<div class="a" style="left:288.80px;top:211.80px;width:44.70px;height:13.00px;background:#f0f0f0;border:.7px solid #b4b4b4;box-sizing:border-box"></div>
<div class="t" style="left:293.00px;top:212.45px;font-size:8.80px;line-height:8.80px;color:#2b2b2b;transform:scaleX(0.885);transform-origin:0 50%;">Микас 7.1</div>
<div class="a" style="left:334.00px;top:211.80px;width:46.00px;height:13.00px;background:#f0f0f0;border:.7px solid #b4b4b4;box-sizing:border-box"></div>
<div class="t" style="left:338.00px;top:212.45px;font-size:8.80px;line-height:8.80px;color:#2b2b2b;transform:scaleX(0.885);transform-origin:0 50%;">Bosch M1.5.4</div>
<div class="a" style="left:570.00px;top:211.80px;width:55.30px;height:13.00px;background:#f0f0f0;border:.7px solid #b4b4b4;box-sizing:border-box"></div>
<div class="t" style="right:336.60px;top:212.45px;font-size:8.80px;line-height:8.80px;color:#2b2b2b;transform:scaleX(0.885);transform-origin:100% 50%;">Bosch M7.9.7/ME7.9.9</div>
<div class="a" style="left:625.80px;top:211.80px;width:31.80px;height:13.00px;background:#f0f0f0;border:.7px solid #b4b4b4;box-sizing:border-box"></div>
<div class="t" style="left:629.50px;top:212.45px;font-size:8.80px;line-height:8.80px;color:#2b2b2b;transform:scaleX(0.885);transform-origin:0 50%;">M7.4</div>
<div class="a" style="left:636.80px;top:211.80px;width:11.60px;height:9.20px;background:#f6f6f6;border:.7px solid #b9b9b9;box-sizing:border-box"></div>
<div class="a" style="left:648.40px;top:211.80px;width:11.40px;height:9.20px;background:#f6f6f6;border:.7px solid #b9b9b9;box-sizing:border-box"></div>
<svg class="a" style="left:641.2px;top:214.4px;width:3px;height:4.400px" viewBox="0 0 3 4"><path d="M3 0v4L0 2z" fill="#222"/></svg>
<svg class="a" style="left:652.8px;top:214.4px;width:3px;height:4.400px" viewBox="0 0 3 4"><path d="M0 0v4l3-2z" fill="#222"/></svg>
<div class="a" style="left:209.80px;top:224.30px;width:448.00px;height:237.00px;background:#fff;border:.7px solid #bdbdbd;box-sizing:border-box"></div>
<div class="a" style="left:210.20px;top:210.00px;width:48.80px;height:15.20px;background:#fff;border:.7px solid #b4b4b4;border-bottom:none;box-sizing:border-box"></div>
<div class="t" style="left:215.00px;top:212.25px;font-size:8.80px;line-height:8.80px;color:#2b2b2b;transform:scaleX(0.885);transform-origin:0 50%;">Январь 5.x</div>
<div class="a" style="left:212.50px;top:231.00px;width:377.50px;height:135.00px;border:.7px solid #e0e0e0;box-sizing:border-box"></div>
<div class="t" style="left:216.50px;top:225.95px;font-size:8.80px;line-height:8.80px;color:#2b2b2b;background:#fff;padding:0 1.500px;transform:scaleX(.885);transform-origin:0 50%">База пользовательских файлов</div>
<div class="a" style="left:214.40px;top:237.30px;width:82.30px;height:99.50px;background:#fff;border:.7px solid #b4b6bb;box-sizing:border-box"></div>
<div class="a" style="left:223.00px;top:244.00px;width:9.00px;height:0.70px;background:#b0b0b0"></div>
<svg class="a" style="left:232px;top:239.3px;width:10.500px;height:10px" viewBox="0 0 21 20"><rect x="1" y="1" width="16" height="18" fill="#f4f6ff" stroke="#6a78c8" stroke-width="1.200"/><path d="M17 3h3v17h-15v-2" fill="none" stroke="#555" stroke-width="1.400"/><g fill="#1c2ed8"><rect x="3" y="3" width="3" height="5"/><rect x="8" y="3" width="2" height="5"/><rect x="12" y="3" width="3" height="5"/><rect x="3" y="11" width="2" height="5"/><rect x="7" y="11" width="3" height="5"/><rect x="12" y="11" width="3" height="5"/></g></svg>
<div class="a" style="left:243.80px;top:239.50px;width:52.20px;height:9.80px;background:#ededed"></div>
<div class="t" style="left:245.50px;top:240.05px;font-size:8.80px;line-height:8.80px;color:#2b2b2b;transform:scaleX(0.883);transform-origin:0 50%;width:57px;overflow:hidden">B101CR(LR)02</div>
<div class="a" style="left:215.10px;top:325.20px;width:80.90px;height:10.90px;background:#f0f0f0"></div>
<div class="a" style="left:227.80px;top:326.00px;width:38.20px;height:9.40px;background:#cdcdcd"></div>
<svg class="a" style="left:219px;top:327.5px;width:5px;height:7px" viewBox="0 0 5 7"><path d="M4 .8L1.200 3.500 4 6.200" fill="none" stroke="#404040" stroke-width="1.200"/></svg>
<svg class="a" style="left:287px;top:327.5px;width:5px;height:7px" viewBox="0 0 5 7"><path d="M1 .8l2.800 2.700L1 6.200" fill="none" stroke="#404040" stroke-width="1.200"/></svg>
<div class="a" style="left:298.50px;top:237.30px;width:288.50px;height:99.50px;background:#fff;border:.7px solid #b4b6bb;box-sizing:border-box"></div>
<div class="t" style="left:218.30px;top:343.65px;font-size:8.80px;line-height:8.80px;color:#2b2b2b;transform:scaleX(0.885);transform-origin:0 50%;">Файл: C:\Users\Сергей\Desktop\B101CR(LR)02.bin</div>
<div class="t" style="left:218.30px;top:354.55px;font-size:8.80px;line-height:8.80px;color:#2b2b2b;transform:scaleX(0.885);transform-origin:0 50%;">Создан: 01.09.2014 17:59</div>
<div class="a" style="left:212.50px;top:375.00px;width:377.50px;height:31.00px;border:.7px solid #e0e0e0;box-sizing:border-box"></div>
<div class="t" style="left:216.50px;top:370.85px;font-size:8.80px;line-height:8.80px;color:#2b2b2b;background:#fff;padding:0 1.500px;transform:scaleX(.885);transform-origin:0 50%">Состояние буфера</div>
<div class="t" style="left:218.30px;top:388.15px;font-size:8.80px;line-height:8.80px;color:#2b2b2b;transform:scaleX(0.885);transform-origin:0 50%;">Загружен файл: C:\Users\Сергей\Desktop\B101CR(LR)02.bin</div>
<div class="a" style="left:212.50px;top:415.00px;width:442.50px;height:41.50px;border:.7px solid #e0e0e0;box-sizing:border-box"></div>
<div class="t" style="left:216.50px;top:411.15px;font-size:8.80px;line-height:8.80px;color:#2b2b2b;background:#fff;padding:0 1.500px;transform:scaleX(.885);transform-origin:0 50%">Состояние процесса</div>
<div class="t" style="left:218.00px;top:427.85px;font-size:8.80px;line-height:8.80px;color:#2b2b2b;transform:scaleX(0.885);transform-origin:0 50%;">Нет операций</div>
<div class="a" style="left:218.00px;top:439.80px;width:434.00px;height:7.80px;background:#e6e6e6;border:.7px solid #cbcbcb;box-sizing:border-box"></div>
<div class="a" style="left:590.50px;top:230.50px;width:64.50px;height:99.50px;border:.7px solid #e0e0e0;box-sizing:border-box"></div>
<div class="t" style="left:571.00px;top:226.05px;font-size:8.80px;line-height:8.80px;color:#2b2b2b;background:#fff;padding:0 1.500px;transform:scaleX(.885);transform-origin:0 50%">Команды</div>
<div class="btn" style="left:573.00px;top:238.00px;width:78.00px;height:12.30px;line-height:11.30px;font-size:8.80px;color:#2b2b2b;"><span>Установить связь</span></div>
<div class="btn" style="left:569.00px;top:253.00px;width:82.00px;height:12.30px;line-height:11.30px;font-size:8.80px;color:#2b2b2b;"><span>Считать FLASH</span></div>
<div class="btn" style="left:568.00px;top:268.00px;width:83.00px;height:12.30px;line-height:11.30px;font-size:8.80px;color:#2b2b2b;"><span>Считать EEPROM</span></div>
<div class="btn" style="left:569.00px;top:283.00px;width:82.00px;height:12.30px;line-height:11.30px;font-size:8.80px;color:#a8a8a8;"><span>Записать FLASH</span></div>
<div class="a" style="left:209.80px;top:461.30px;width:451.00px;height:0.70px;background:#7a7a7a"></div>
<svg class="a" style="left:213px;top:461.3px;width:72px;height:13.500px" viewBox="0 0 72 13.500"><path d="M37 .3h33.200l-3 12.400h-26.800z" fill="#f0f0f0"/><path d="M38.200 6.500l1.800 6.200h27.200l3-12.400" fill="none" stroke="#555" stroke-width=".7"/><path d="M3.200 0l3.200 12.700h30l3.300-12.700z" fill="#fff"/><path d="M3.200 0l3.200 12.700h30l3.300-12.700" fill="none" stroke="#555" stroke-width=".7"/><text x="7.400" y="9.800" font-family="Liberation Sans,sans-serif" font-size="8.200" fill="#2b2b2b" textLength="28" lengthAdjust="spacingAndGlyphs">Главная</text><text x="42.800" y="9.800" font-family="Liberation Sans,sans-serif" font-size="8.200" fill="#2b2b2b" textLength="22" lengthAdjust="spacingAndGlyphs">Буфер</text></svg>
<div class="a" style="left:209.80px;top:478.60px;width:139.70px;height:12.20px;border:.7px solid #dadada;box-sizing:border-box;background:#f0f0f0"></div>
<div class="a" style="left:350.50px;top:478.60px;width:310.10px;height:12.20px;border:.7px solid #dadada;box-sizing:border-box;background:#f0f0f0"></div>
<div class="t" style="left:353.00px;top:480.39px;font-size:8.40px;line-height:8.40px;color:#111;">Версия ПО:</div>
<div class="a" style="left:366.70px;top:107.50px;width:225.80px;height:324.50px;background:#ebebeb;box-shadow:0 0 0 .6px #bcbcbc"></div>
<div class="t" style="left:380.00px;width:200px;text-align:center;top:113.31px;font-size:10.50px;line-height:10.50px;color:#2a2a2a;transform:scaleX(0.968);transform-origin:50% 50%;">Настройки</div>
<div class="a" style="left:566.00px;top:107.90px;width:21.40px;height:14.10px;background:#bcbcbc"></div>
<svg class="a" style="left:573.2px;top:111.4px;width:7px;height:7px" viewBox="0 0 7 7"><path d="M.8.8l5.400 5.400M6.200.8L.8 6.200" stroke="#fff" stroke-width="1.300"/></svg>
<div class="a" style="left:372.50px;top:128.70px;width:215.10px;height:297.30px;background:#f1f1f1;box-shadow:0 0 0 .5px #dedede"></div>
<div class="t" style="left:378.70px;top:135.85px;font-size:8.80px;line-height:8.80px;color:#2b2b2b;transform:scaleX(0.885);transform-origin:0 50%;">Скорость обмена с ЭБУ</div>
<div class="cb" style="left:378.00px;top:152.00px;width:208.80px;height:14.70px"></div>
<div class="t" style="left:381.20px;top:155.10px;font-size:8.80px;line-height:8.80px;color:#2b2b2b;transform:scaleX(0.885);transform-origin:0 50%;">38400 бод</div>
<svg class="a" style="left:577.10px;top:157.15px;width:7px;height:5px" viewBox="0 0 7 5"><path d="M.8 1l2.700 2.800L6.200 1" fill="none" stroke="#404040" stroke-width="1.100"/></svg>
<div class="t" style="left:380.00px;top:174.85px;font-size:8.80px;line-height:8.80px;color:#2b2b2b;transform:scaleX(0.885);transform-origin:0 50%;">Скорость обмена с ЭБУ Микас-10.3 (+)</div>
<div class="cb" style="left:378.00px;top:185.50px;width:208.80px;height:14.90px"></div>
<div class="t" style="left:381.20px;top:188.70px;font-size:8.80px;line-height:8.80px;color:#2b2b2b;transform:scaleX(0.885);transform-origin:0 50%;">19200 бод</div>
<svg class="a" style="left:577.10px;top:190.75px;width:7px;height:5px" viewBox="0 0 7 5"><path d="M.8 1l2.700 2.800L6.200 1" fill="none" stroke="#404040" stroke-width="1.100"/></svg>
<div class="t" style="left:378.70px;top:208.65px;font-size:8.80px;line-height:8.80px;color:#2b2b2b;transform:scaleX(0.885);transform-origin:0 50%;">Скорость обмена с ЭБУ Bosch MP 7.0 при записи</div>
<div class="cb" style="left:378.00px;top:219.80px;width:208.80px;height:14.20px"></div>
<div class="t" style="left:381.20px;top:222.65px;font-size:8.80px;line-height:8.80px;color:#2b2b2b;transform:scaleX(0.885);transform-origin:0 50%;">10400 бод</div>
<svg class="a" style="left:577.10px;top:224.70px;width:7px;height:5px" viewBox="0 0 7 5"><path d="M.8 1l2.700 2.800L6.200 1" fill="none" stroke="#404040" stroke-width="1.100"/></svg>
<div class="t" style="left:378.70px;top:242.35px;font-size:8.80px;line-height:8.80px;color:#2b2b2b;transform:scaleX(0.885);transform-origin:0 50%;">Используемый COM порт</div>
<div class="cb" style="left:378.00px;top:253.00px;width:107.50px;height:14.60px"></div>
<div class="t" style="left:381.20px;top:256.05px;font-size:8.80px;line-height:8.80px;color:#2b2b2b;transform:scaleX(0.885);transform-origin:0 50%;">COM4</div>
<svg class="a" style="left:475.80px;top:258.10px;width:7px;height:5px" viewBox="0 0 7 5"><path d="M.8 1l2.700 2.800L6.200 1" fill="none" stroke="#404040" stroke-width="1.100"/></svg>
<div class="btn" style="left:496.80px;top:252.50px;width:84.00px;height:16.30px;line-height:15.30px;font-size:8.80px;color:#2b2b2b;border:1px solid #3c9ae8;background:linear-gradient(#f4f8fc,#e4eef8)"><span>Тест KLine адаптера</span></div>
<div class="t" style="left:378.70px;top:275.85px;font-size:8.80px;line-height:8.80px;color:#2b2b2b;transform:scaleX(0.885);transform-origin:0 50%;">Путь к диагностической програмие</div>
<div class="a" style="left:378.00px;top:287.50px;width:208.80px;height:12.50px;background:#fff;border:.7px solid #acacac;box-sizing:border-box"></div>
<div class="btn" style="left:468.80px;top:406.50px;width:51.20px;height:14.50px;line-height:13.50px;font-size:8.80px;color:#2b2b2b;"><span>Ok</span></div>
<div class="btn" style="left:530.50px;top:406.50px;width:51.30px;height:14.50px;line-height:13.50px;font-size:8.80px;color:#2b2b2b;"><span>Отмена</span></div>
<div class="a" style="left:308.60px;top:291.70px;width:347.80px;height:119.70px;background:#63a9f3;box-shadow:0 0 0 .6px #4a8cd4"></div>
<div class="t" style="left:314.80px;top:296.91px;font-size:10.50px;line-height:10.50px;color:#111;transform:scaleX(0.968);transform-origin:0 50%;">ChipLoader 1.97.7 [Brokkoff] - C:\Users\Сергей\Desktop\B101CR(L...</div>
<div class="a" style="left:630.50px;top:292.40px;width:21.30px;height:13.10px;background:#c8463c"></div>
<svg class="a" style="left:637.6px;top:295.4px;width:7px;height:7px" viewBox="0 0 7 7"><path d="M.8.8l5.400 5.400M6.200.8L.8 6.200" stroke="#fff" stroke-width="1.300"/></svg>
<div class="a" style="left:313.30px;top:313.00px;width:338.00px;height:58.00px;background:#fff"></div>
<div class="a" style="left:313.30px;top:371.00px;width:338.00px;height:35.40px;background:#f0f0f0"></div>
<svg class="a" style="left:331.2px;top:331.7px;width:21.600px;height:21.600px" viewBox="0 0 32 32"><circle cx="16" cy="16" r="15.500" fill="#1b7ad0"/><circle cx="16" cy="8.800" r="2.600" fill="#fff"/><rect x="13.700" y="13.200" width="4.600" height="12.500" rx=".8" fill="#fff"/></svg>
<div class="t" style="left:359.00px;top:338.60px;font-size:8.50px;line-height:8.50px;color:#111;transform:scaleX(0.968);transform-origin:0 50%;">K-Line адаптер на COM4 работает нормально</div>
<div class="btn" style="left:585.00px;top:381.00px;width:60.00px;height:16.60px;line-height:15.60px;font-size:9.20px;color:#111;border:1px solid #3c9ae8;background:linear-gradient(#f6f9fc,#e6eef7)"><span>OK</span></div>
<div class="a" style="left:-6px;top:511.6px;width:972px;height:34px;background:#3f6492"></div>
<div class="a" style="left:55.2px;top:512.3px;width:41.200px;height:26px;box-sizing:border-box;background:#5f7ea8;border:.7px solid #7d97ba"></div>
<div class="a" style="left:98.8px;top:512.3px;width:41.200px;height:26px;box-sizing:border-box;background:#5f7ea8;border:.7px solid #7d97ba"></div>
<div class="a" style="left:142.2px;top:512.3px;width:41.200px;height:26px;box-sizing:border-box;background:#5f7ea8;border:.7px solid #7d97ba"></div>
<div class="a" style="left:185.8px;top:512.3px;width:41.200px;height:26px;box-sizing:border-box;background:linear-gradient(#a5b8d0,#8fa5c2);border:.7px solid #c8d4e4"></div>
<div class="a" style="left:229.6px;top:512.3px;width:41.200px;height:26px;box-sizing:border-box;background:#5f7ea8;border:.7px solid #7d97ba"></div>
<svg class="a" style="left:20.8px;top:515.8px;width:23px;height:20.800px" viewBox="0 0 46 41" preserveAspectRatio="none"><path d="M0 3h16l3 4h27v30h-46z" fill="#f3d77a"/><path d="M0 9h46v28h-46z" fill="#fbeaa4"/><rect x="5" y="2" width="5" height="3.500" fill="#38b038"/><rect x="17" y="5" width="5" height="3.500" fill="#d83a2a"/><rect x="28" y="8" width="6" height="3.500" fill="#3a90d8"/><path d="M0 34h46v3h-46z" fill="#f1d67a"/><path d="M9 24h29l3 10h-8v-4h-19v4h-8z" fill="#8ccdf0"/><path d="M4 34h38v7h-38z" fill="#a8daf5"/><path d="M13 34h20v7h-20z" fill="#f9e69a"/><path d="M11 26h25l1.500 4h-28z" fill="#5aaee0"/></svg>
<div class="a" style="left:62.8px;top:514.2px;width:24.6px;height:24.6px"><svg style="width:100%;height:100%;display:block;overflow:visible" viewBox="0 0 32 32"><circle cx="17" cy="15" r="13.500" fill="#e8453c"/><path d="M17 15L5.300 8.200A13.500 13.500 0 0010.300 26.700z" fill="#34a853"/><path d="M17 15l-6.700 11.700A13.500 13.500 0 0030.500 15z" fill="#fbc116"/><path d="M17 15h13.500A13.500 13.500 0 005.300 8.200z" fill="#e8453c"/><circle cx="17" cy="15" r="6.300" fill="#f4f4f4"/><circle cx="17" cy="15" r="4.900" fill="#4a8af4"/></svg></div>
<div class="a" style="left:108.8px;top:515.0px;width:21.5px;height:21.5px"><svg style="width:100%;height:100%;display:block;overflow:visible" viewBox="0 0 32 32"><path fill-rule="evenodd" d="M16 .600a15.500 15.400 0 100 30.800A15.500 15.400 0 0016 .600zm0 3.900c3.700 0 6.400 5 6.400 11.500S19.700 27.500 16 27.500 9.600 22.500 9.600 16 12.300 4.500 16 4.500z" fill="#e3262e"/><path d="M22 1.800a15.500 15.400 0 010 28.400c4-2.800 5.800-7.800 5.800-14.200S26 4.600 22 1.800z" fill="#b3141c" opacity=".7"/></svg></div>
<div class="a" style="left:151.6px;top:514.8px;width:22.5px;height:22.5px"><svg style="width:100%;height:100%;display:block;overflow:visible" viewBox="0 0 32 32"><circle cx="11.500" cy="10" r="10" fill="#14a8ea"/><circle cx="21" cy="22" r="10" fill="#14a8ea"/><circle cx="16.200" cy="16" r="14" fill="#14a8ea"/><path d="M21.800 10.500c-1.800-2.300-9-2.800-9.400 1.600-.3 4.400 9.800 2.700 9.800 7.600 0 4.600-8.700 4.400-11 .9" fill="none" stroke="#fff" stroke-width="3.600" stroke-linecap="round"/></svg></div>
<svg class="a" style="left:196px;top:513.8px;width:24px;height:23.500px" viewBox="0 0 48 47"><rect x="6" y="3" width="22" height="42" rx="3" fill="#f06a2a"/><rect x="9" y="3" width="13" height="42" fill="#f59a4a" opacity=".7"/><rect x="1" y="7" width="30" height="2.500" fill="#f04a1a"/><rect x="1" y="12" width="30" height="2.500" fill="#f04a1a"/><rect x="1" y="17" width="30" height="2.500" fill="#f04a1a"/><rect x="1" y="22" width="30" height="2.500" fill="#f04a1a"/><rect x="1" y="27" width="30" height="2.500" fill="#f04a1a"/><rect x="1" y="32" width="30" height="2.500" fill="#f04a1a"/><rect x="1" y="37" width="30" height="2.500" fill="#f04a1a"/><rect x="1" y="41" width="30" height="2.500" fill="#f04a1a"/><rect x="7" y="4" width="20" height="40" rx="2" fill="#f07a3a"/><rect x="11" y="4" width="8" height="40" fill="#f8b070" opacity=".6"/><rect x="17" y="5" width="26" height="15" rx="1.500" fill="#d82a2a"/><text x="30" y="17.500" font-family="Liberation Sans,sans-serif" font-size="14" font-weight="bold" fill="#fff" text-anchor="middle">CL</text></svg>
<div class="a" style="left:238.5px;top:515.2px;width:22.5px;height:22.5px"><svg style="width:100%;height:100%;display:block;overflow:visible" viewBox="0 0 32 32"><polygon points="0,9 8,4 31.500,4.800 31.500,9.500 7,12.500" fill="#6b2f5e"/><polygon points="0,9 7,12.500 7,29.500 0.800,24.500" fill="#ece8e2"/><path d="M0.300 14.300l6.700 4.200M0.600 19.500l6.400 4.800" stroke="#4a4a4a" stroke-width=".9"/><polygon points="7,12.500 31.500,9.500 31.500,15.300 7,18.300" fill="#b83cae"/><polygon points="7,12.500 31.500,9.500 31.500,11.300 7,14.300" fill="#e070d2"/><polygon points="7,18.700 31.500,15.700 31.500,21.300 7,24.300" fill="#1c2ed0"/><polygon points="7,18.700 31.500,15.700 31.500,17.300 7,20.300" fill="#4a62f0"/><polygon points="7,24.700 31.500,21.700 31.500,26.800 7,29.600" fill="#1fa526"/><polygon points="7,24.700 31.500,21.700 31.500,23.200 7,26.200" fill="#4ad64c"/><path d="M7 18.500L31.500 15.500M7 24.500L31.500 21.500M7 12.500L31.500 9.500" stroke="#1c1020" stroke-width=".9"/><polygon points="7,29.600 31.500,26.800 31.500,27.800 7,30.600 .800,25.500 .800,24.500" fill="#0e3a12"/><polygon points="17,4.400 21,4.500 20.600,28.200 16.600,28.600" fill="#b98a3c"/><polygon points="17,4.400 18.300,4.450 17.900,28.450 16.600,28.600" fill="#7a5520"/><rect x="16" y="14.500" width="5.400" height="6" rx="1.200" fill="#cfcfcf" stroke="#4a4a4a" stroke-width=".7"/><rect x="18" y="16" width="1.400" height="3" fill="#333"/></svg></div>
<svg class="a" style="left:806.5px;top:524.8px;width:6.500px;height:3.600px" viewBox="0 0 13 7"><path d="M0 7L6.500 0 13 7z" fill="#fff"/></svg>
<svg class="a" style="left:825px;top:521px;width:7.500px;height:11px" viewBox="0 0 15 22"><rect x="1.500" y="2.500" width="12" height="18" rx="2" fill="none" stroke="#fff" stroke-width="1.800"/><rect x="5" y="0" width="5" height="2.500" fill="#fff"/><rect x="4.500" y="6" width="6" height="9" fill="#1c2c44"/><rect x="4.500" y="15" width="6" height="3.500" fill="#fff"/></svg>
<svg class="a" style="left:837.5px;top:522.3px;width:11.500px;height:8.500px" viewBox="0 0 23 17"><g fill="#fff"><rect x="0" y="14" width="3" height="3"/><rect x="5" y="11" width="3" height="6"/><rect x="10" y="8" width="3" height="9"/><rect x="15" y="4" width="3" height="13"/><rect x="20" y="0" width="3" height="17"/></g></svg>
<svg class="a" style="left:855px;top:521.5px;width:11.500px;height:10.500px" viewBox="0 0 23 21"><path d="M1 7h4l6-6v19l-6-6h-4z" fill="#fff"/><path d="M14 6c2 2.500 2 6.500 0 9M17.500 3c3.500 4 3.500 11 0 15" fill="none" stroke="#fff" stroke-width="1.500"/></svg>
<div class="t" style="left:876px;top:521.3px;font-size:9.800px;line-height:10px;color:#fff;transform:scaleX(.84);transform-origin:0 50%">РУС</div>
<div class="t" style="left:893px;width:60px;text-align:center;top:515.8px;font-size:8.800px;line-height:10px;color:#fff;transform:scaleX(.85)">9:22</div>
<div class="t" style="left:893px;width:60px;text-align:center;top:527.4px;font-size:8.600px;line-height:10px;color:#fff;letter-spacing:-.4px;transform:scaleX(.98)">03.09.2016</div>
</div></body></html>
